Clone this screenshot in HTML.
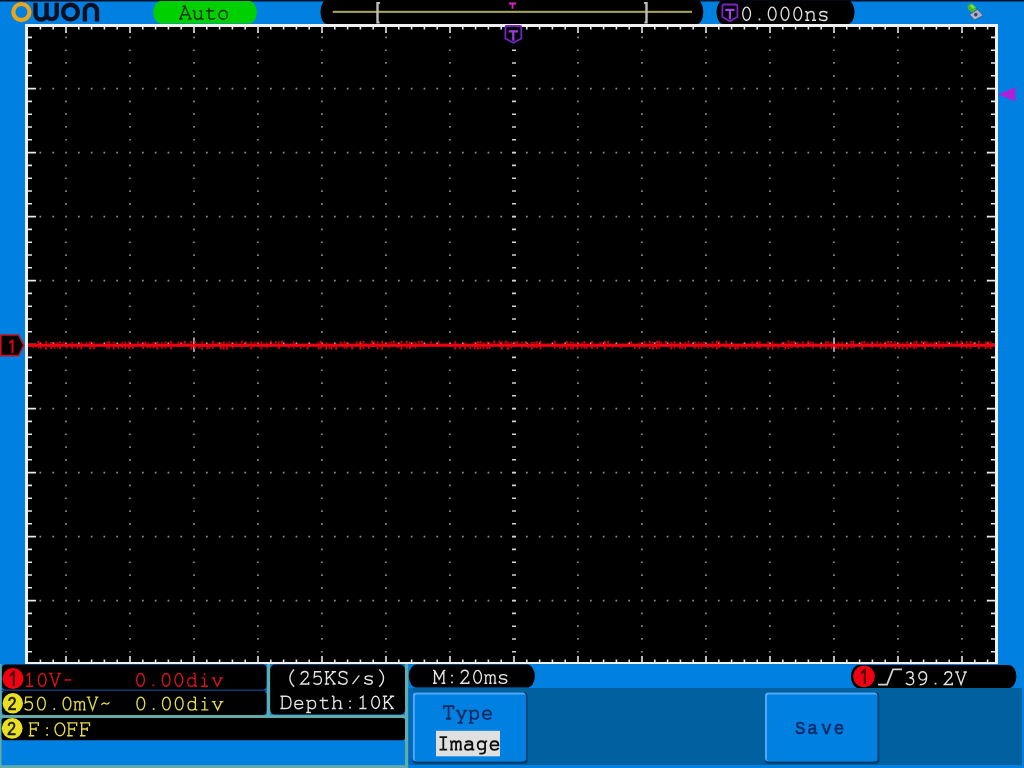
<!DOCTYPE html>
<html><head><meta charset="utf-8"><style>
html,body{margin:0;padding:0;width:1024px;height:768px;overflow:hidden;background:#0080e0;}
svg{display:block;position:absolute;left:0;top:0;filter:blur(0.4px);}
text{font-family:"Liberation Mono",monospace;}
</style></head><body>
<svg width="1024" height="768" viewBox="0 0 1024 768">
<rect x="0" y="0" width="1024" height="768" fill="#0080e0"/>
<rect x="0" y="0" width="1024" height="1.5" fill="#001028"/>
<rect x="25" y="24" width="973" height="640" fill="#f0f0f0"/>
<rect x="28" y="27" width="967" height="635" fill="#000"/>
<path d="M65.2 36.5h1.7v1.7h-1.7zM65.2 49.4h1.7v1.7h-1.7zM65.2 62.1h1.7v1.7h-1.7zM65.2 75.0h1.7v1.7h-1.7zM65.2 87.8h1.7v1.7h-1.7zM65.2 100.5h1.7v1.7h-1.7zM65.2 113.3h1.7v1.7h-1.7zM65.2 126.1h1.7v1.7h-1.7zM65.2 138.9h1.7v1.7h-1.7zM65.2 151.8h1.7v1.7h-1.7zM65.2 164.6h1.7v1.7h-1.7zM65.2 177.4h1.7v1.7h-1.7zM65.2 190.2h1.7v1.7h-1.7zM65.2 203.0h1.7v1.7h-1.7zM65.2 215.8h1.7v1.7h-1.7zM65.2 228.6h1.7v1.7h-1.7zM65.2 241.4h1.7v1.7h-1.7zM65.2 254.2h1.7v1.7h-1.7zM65.2 267.0h1.7v1.7h-1.7zM65.2 279.8h1.7v1.7h-1.7zM65.2 292.6h1.7v1.7h-1.7zM65.2 305.4h1.7v1.7h-1.7zM65.2 318.2h1.7v1.7h-1.7zM65.2 331.0h1.7v1.7h-1.7zM65.2 343.8h1.7v1.7h-1.7zM65.2 356.6h1.7v1.7h-1.7zM65.2 369.4h1.7v1.7h-1.7zM65.2 382.2h1.7v1.7h-1.7zM65.2 395.0h1.7v1.7h-1.7zM65.2 407.8h1.7v1.7h-1.7zM65.2 420.6h1.7v1.7h-1.7zM65.2 433.4h1.7v1.7h-1.7zM65.2 446.2h1.7v1.7h-1.7zM65.2 459.0h1.7v1.7h-1.7zM65.2 471.8h1.7v1.7h-1.7zM65.2 484.6h1.7v1.7h-1.7zM65.2 497.4h1.7v1.7h-1.7zM65.2 510.2h1.7v1.7h-1.7zM65.2 523.0h1.7v1.7h-1.7zM65.2 535.8h1.7v1.7h-1.7zM65.2 548.6h1.7v1.7h-1.7zM65.2 561.4h1.7v1.7h-1.7zM65.2 574.2h1.7v1.7h-1.7zM65.2 587.0h1.7v1.7h-1.7zM65.2 599.8h1.7v1.7h-1.7zM65.2 612.5h1.7v1.7h-1.7zM65.2 625.3h1.7v1.7h-1.7zM65.2 638.1h1.7v1.7h-1.7zM65.2 650.9h1.7v1.7h-1.7zM129.2 36.5h1.7v1.7h-1.7zM129.2 49.4h1.7v1.7h-1.7zM129.2 62.1h1.7v1.7h-1.7zM129.2 75.0h1.7v1.7h-1.7zM129.2 87.8h1.7v1.7h-1.7zM129.2 100.5h1.7v1.7h-1.7zM129.2 113.3h1.7v1.7h-1.7zM129.2 126.1h1.7v1.7h-1.7zM129.2 138.9h1.7v1.7h-1.7zM129.2 151.8h1.7v1.7h-1.7zM129.2 164.6h1.7v1.7h-1.7zM129.2 177.4h1.7v1.7h-1.7zM129.2 190.2h1.7v1.7h-1.7zM129.2 203.0h1.7v1.7h-1.7zM129.2 215.8h1.7v1.7h-1.7zM129.2 228.6h1.7v1.7h-1.7zM129.2 241.4h1.7v1.7h-1.7zM129.2 254.2h1.7v1.7h-1.7zM129.2 267.0h1.7v1.7h-1.7zM129.2 279.8h1.7v1.7h-1.7zM129.2 292.6h1.7v1.7h-1.7zM129.2 305.4h1.7v1.7h-1.7zM129.2 318.2h1.7v1.7h-1.7zM129.2 331.0h1.7v1.7h-1.7zM129.2 343.8h1.7v1.7h-1.7zM129.2 356.6h1.7v1.7h-1.7zM129.2 369.4h1.7v1.7h-1.7zM129.2 382.2h1.7v1.7h-1.7zM129.2 395.0h1.7v1.7h-1.7zM129.2 407.8h1.7v1.7h-1.7zM129.2 420.6h1.7v1.7h-1.7zM129.2 433.4h1.7v1.7h-1.7zM129.2 446.2h1.7v1.7h-1.7zM129.2 459.0h1.7v1.7h-1.7zM129.2 471.8h1.7v1.7h-1.7zM129.2 484.6h1.7v1.7h-1.7zM129.2 497.4h1.7v1.7h-1.7zM129.2 510.2h1.7v1.7h-1.7zM129.2 523.0h1.7v1.7h-1.7zM129.2 535.8h1.7v1.7h-1.7zM129.2 548.6h1.7v1.7h-1.7zM129.2 561.4h1.7v1.7h-1.7zM129.2 574.2h1.7v1.7h-1.7zM129.2 587.0h1.7v1.7h-1.7zM129.2 599.8h1.7v1.7h-1.7zM129.2 612.5h1.7v1.7h-1.7zM129.2 625.3h1.7v1.7h-1.7zM129.2 638.1h1.7v1.7h-1.7zM129.2 650.9h1.7v1.7h-1.7zM193.2 36.5h1.7v1.7h-1.7zM193.2 49.4h1.7v1.7h-1.7zM193.2 62.1h1.7v1.7h-1.7zM193.2 75.0h1.7v1.7h-1.7zM193.2 87.8h1.7v1.7h-1.7zM193.2 100.5h1.7v1.7h-1.7zM193.2 113.3h1.7v1.7h-1.7zM193.2 126.1h1.7v1.7h-1.7zM193.2 138.9h1.7v1.7h-1.7zM193.2 151.8h1.7v1.7h-1.7zM193.2 164.6h1.7v1.7h-1.7zM193.2 177.4h1.7v1.7h-1.7zM193.2 190.2h1.7v1.7h-1.7zM193.2 203.0h1.7v1.7h-1.7zM193.2 215.8h1.7v1.7h-1.7zM193.2 228.6h1.7v1.7h-1.7zM193.2 241.4h1.7v1.7h-1.7zM193.2 254.2h1.7v1.7h-1.7zM193.2 267.0h1.7v1.7h-1.7zM193.2 279.8h1.7v1.7h-1.7zM193.2 292.6h1.7v1.7h-1.7zM193.2 305.4h1.7v1.7h-1.7zM193.2 318.2h1.7v1.7h-1.7zM193.2 331.0h1.7v1.7h-1.7zM193.2 343.8h1.7v1.7h-1.7zM193.2 356.6h1.7v1.7h-1.7zM193.2 369.4h1.7v1.7h-1.7zM193.2 382.2h1.7v1.7h-1.7zM193.2 395.0h1.7v1.7h-1.7zM193.2 407.8h1.7v1.7h-1.7zM193.2 420.6h1.7v1.7h-1.7zM193.2 433.4h1.7v1.7h-1.7zM193.2 446.2h1.7v1.7h-1.7zM193.2 459.0h1.7v1.7h-1.7zM193.2 471.8h1.7v1.7h-1.7zM193.2 484.6h1.7v1.7h-1.7zM193.2 497.4h1.7v1.7h-1.7zM193.2 510.2h1.7v1.7h-1.7zM193.2 523.0h1.7v1.7h-1.7zM193.2 535.8h1.7v1.7h-1.7zM193.2 548.6h1.7v1.7h-1.7zM193.2 561.4h1.7v1.7h-1.7zM193.2 574.2h1.7v1.7h-1.7zM193.2 587.0h1.7v1.7h-1.7zM193.2 599.8h1.7v1.7h-1.7zM193.2 612.5h1.7v1.7h-1.7zM193.2 625.3h1.7v1.7h-1.7zM193.2 638.1h1.7v1.7h-1.7zM193.2 650.9h1.7v1.7h-1.7zM257.1 36.5h1.7v1.7h-1.7zM257.1 49.4h1.7v1.7h-1.7zM257.1 62.1h1.7v1.7h-1.7zM257.1 75.0h1.7v1.7h-1.7zM257.1 87.8h1.7v1.7h-1.7zM257.1 100.5h1.7v1.7h-1.7zM257.1 113.3h1.7v1.7h-1.7zM257.1 126.1h1.7v1.7h-1.7zM257.1 138.9h1.7v1.7h-1.7zM257.1 151.8h1.7v1.7h-1.7zM257.1 164.6h1.7v1.7h-1.7zM257.1 177.4h1.7v1.7h-1.7zM257.1 190.2h1.7v1.7h-1.7zM257.1 203.0h1.7v1.7h-1.7zM257.1 215.8h1.7v1.7h-1.7zM257.1 228.6h1.7v1.7h-1.7zM257.1 241.4h1.7v1.7h-1.7zM257.1 254.2h1.7v1.7h-1.7zM257.1 267.0h1.7v1.7h-1.7zM257.1 279.8h1.7v1.7h-1.7zM257.1 292.6h1.7v1.7h-1.7zM257.1 305.4h1.7v1.7h-1.7zM257.1 318.2h1.7v1.7h-1.7zM257.1 331.0h1.7v1.7h-1.7zM257.1 343.8h1.7v1.7h-1.7zM257.1 356.6h1.7v1.7h-1.7zM257.1 369.4h1.7v1.7h-1.7zM257.1 382.2h1.7v1.7h-1.7zM257.1 395.0h1.7v1.7h-1.7zM257.1 407.8h1.7v1.7h-1.7zM257.1 420.6h1.7v1.7h-1.7zM257.1 433.4h1.7v1.7h-1.7zM257.1 446.2h1.7v1.7h-1.7zM257.1 459.0h1.7v1.7h-1.7zM257.1 471.8h1.7v1.7h-1.7zM257.1 484.6h1.7v1.7h-1.7zM257.1 497.4h1.7v1.7h-1.7zM257.1 510.2h1.7v1.7h-1.7zM257.1 523.0h1.7v1.7h-1.7zM257.1 535.8h1.7v1.7h-1.7zM257.1 548.6h1.7v1.7h-1.7zM257.1 561.4h1.7v1.7h-1.7zM257.1 574.2h1.7v1.7h-1.7zM257.1 587.0h1.7v1.7h-1.7zM257.1 599.8h1.7v1.7h-1.7zM257.1 612.5h1.7v1.7h-1.7zM257.1 625.3h1.7v1.7h-1.7zM257.1 638.1h1.7v1.7h-1.7zM257.1 650.9h1.7v1.7h-1.7zM321.1 36.5h1.7v1.7h-1.7zM321.1 49.4h1.7v1.7h-1.7zM321.1 62.1h1.7v1.7h-1.7zM321.1 75.0h1.7v1.7h-1.7zM321.1 87.8h1.7v1.7h-1.7zM321.1 100.5h1.7v1.7h-1.7zM321.1 113.3h1.7v1.7h-1.7zM321.1 126.1h1.7v1.7h-1.7zM321.1 138.9h1.7v1.7h-1.7zM321.1 151.8h1.7v1.7h-1.7zM321.1 164.6h1.7v1.7h-1.7zM321.1 177.4h1.7v1.7h-1.7zM321.1 190.2h1.7v1.7h-1.7zM321.1 203.0h1.7v1.7h-1.7zM321.1 215.8h1.7v1.7h-1.7zM321.1 228.6h1.7v1.7h-1.7zM321.1 241.4h1.7v1.7h-1.7zM321.1 254.2h1.7v1.7h-1.7zM321.1 267.0h1.7v1.7h-1.7zM321.1 279.8h1.7v1.7h-1.7zM321.1 292.6h1.7v1.7h-1.7zM321.1 305.4h1.7v1.7h-1.7zM321.1 318.2h1.7v1.7h-1.7zM321.1 331.0h1.7v1.7h-1.7zM321.1 343.8h1.7v1.7h-1.7zM321.1 356.6h1.7v1.7h-1.7zM321.1 369.4h1.7v1.7h-1.7zM321.1 382.2h1.7v1.7h-1.7zM321.1 395.0h1.7v1.7h-1.7zM321.1 407.8h1.7v1.7h-1.7zM321.1 420.6h1.7v1.7h-1.7zM321.1 433.4h1.7v1.7h-1.7zM321.1 446.2h1.7v1.7h-1.7zM321.1 459.0h1.7v1.7h-1.7zM321.1 471.8h1.7v1.7h-1.7zM321.1 484.6h1.7v1.7h-1.7zM321.1 497.4h1.7v1.7h-1.7zM321.1 510.2h1.7v1.7h-1.7zM321.1 523.0h1.7v1.7h-1.7zM321.1 535.8h1.7v1.7h-1.7zM321.1 548.6h1.7v1.7h-1.7zM321.1 561.4h1.7v1.7h-1.7zM321.1 574.2h1.7v1.7h-1.7zM321.1 587.0h1.7v1.7h-1.7zM321.1 599.8h1.7v1.7h-1.7zM321.1 612.5h1.7v1.7h-1.7zM321.1 625.3h1.7v1.7h-1.7zM321.1 638.1h1.7v1.7h-1.7zM321.1 650.9h1.7v1.7h-1.7zM385.1 36.5h1.7v1.7h-1.7zM385.1 49.4h1.7v1.7h-1.7zM385.1 62.1h1.7v1.7h-1.7zM385.1 75.0h1.7v1.7h-1.7zM385.1 87.8h1.7v1.7h-1.7zM385.1 100.5h1.7v1.7h-1.7zM385.1 113.3h1.7v1.7h-1.7zM385.1 126.1h1.7v1.7h-1.7zM385.1 138.9h1.7v1.7h-1.7zM385.1 151.8h1.7v1.7h-1.7zM385.1 164.6h1.7v1.7h-1.7zM385.1 177.4h1.7v1.7h-1.7zM385.1 190.2h1.7v1.7h-1.7zM385.1 203.0h1.7v1.7h-1.7zM385.1 215.8h1.7v1.7h-1.7zM385.1 228.6h1.7v1.7h-1.7zM385.1 241.4h1.7v1.7h-1.7zM385.1 254.2h1.7v1.7h-1.7zM385.1 267.0h1.7v1.7h-1.7zM385.1 279.8h1.7v1.7h-1.7zM385.1 292.6h1.7v1.7h-1.7zM385.1 305.4h1.7v1.7h-1.7zM385.1 318.2h1.7v1.7h-1.7zM385.1 331.0h1.7v1.7h-1.7zM385.1 343.8h1.7v1.7h-1.7zM385.1 356.6h1.7v1.7h-1.7zM385.1 369.4h1.7v1.7h-1.7zM385.1 382.2h1.7v1.7h-1.7zM385.1 395.0h1.7v1.7h-1.7zM385.1 407.8h1.7v1.7h-1.7zM385.1 420.6h1.7v1.7h-1.7zM385.1 433.4h1.7v1.7h-1.7zM385.1 446.2h1.7v1.7h-1.7zM385.1 459.0h1.7v1.7h-1.7zM385.1 471.8h1.7v1.7h-1.7zM385.1 484.6h1.7v1.7h-1.7zM385.1 497.4h1.7v1.7h-1.7zM385.1 510.2h1.7v1.7h-1.7zM385.1 523.0h1.7v1.7h-1.7zM385.1 535.8h1.7v1.7h-1.7zM385.1 548.6h1.7v1.7h-1.7zM385.1 561.4h1.7v1.7h-1.7zM385.1 574.2h1.7v1.7h-1.7zM385.1 587.0h1.7v1.7h-1.7zM385.1 599.8h1.7v1.7h-1.7zM385.1 612.5h1.7v1.7h-1.7zM385.1 625.3h1.7v1.7h-1.7zM385.1 638.1h1.7v1.7h-1.7zM385.1 650.9h1.7v1.7h-1.7zM449.1 36.5h1.7v1.7h-1.7zM449.1 49.4h1.7v1.7h-1.7zM449.1 62.1h1.7v1.7h-1.7zM449.1 75.0h1.7v1.7h-1.7zM449.1 87.8h1.7v1.7h-1.7zM449.1 100.5h1.7v1.7h-1.7zM449.1 113.3h1.7v1.7h-1.7zM449.1 126.1h1.7v1.7h-1.7zM449.1 138.9h1.7v1.7h-1.7zM449.1 151.8h1.7v1.7h-1.7zM449.1 164.6h1.7v1.7h-1.7zM449.1 177.4h1.7v1.7h-1.7zM449.1 190.2h1.7v1.7h-1.7zM449.1 203.0h1.7v1.7h-1.7zM449.1 215.8h1.7v1.7h-1.7zM449.1 228.6h1.7v1.7h-1.7zM449.1 241.4h1.7v1.7h-1.7zM449.1 254.2h1.7v1.7h-1.7zM449.1 267.0h1.7v1.7h-1.7zM449.1 279.8h1.7v1.7h-1.7zM449.1 292.6h1.7v1.7h-1.7zM449.1 305.4h1.7v1.7h-1.7zM449.1 318.2h1.7v1.7h-1.7zM449.1 331.0h1.7v1.7h-1.7zM449.1 343.8h1.7v1.7h-1.7zM449.1 356.6h1.7v1.7h-1.7zM449.1 369.4h1.7v1.7h-1.7zM449.1 382.2h1.7v1.7h-1.7zM449.1 395.0h1.7v1.7h-1.7zM449.1 407.8h1.7v1.7h-1.7zM449.1 420.6h1.7v1.7h-1.7zM449.1 433.4h1.7v1.7h-1.7zM449.1 446.2h1.7v1.7h-1.7zM449.1 459.0h1.7v1.7h-1.7zM449.1 471.8h1.7v1.7h-1.7zM449.1 484.6h1.7v1.7h-1.7zM449.1 497.4h1.7v1.7h-1.7zM449.1 510.2h1.7v1.7h-1.7zM449.1 523.0h1.7v1.7h-1.7zM449.1 535.8h1.7v1.7h-1.7zM449.1 548.6h1.7v1.7h-1.7zM449.1 561.4h1.7v1.7h-1.7zM449.1 574.2h1.7v1.7h-1.7zM449.1 587.0h1.7v1.7h-1.7zM449.1 599.8h1.7v1.7h-1.7zM449.1 612.5h1.7v1.7h-1.7zM449.1 625.3h1.7v1.7h-1.7zM449.1 638.1h1.7v1.7h-1.7zM449.1 650.9h1.7v1.7h-1.7zM577.1 36.5h1.7v1.7h-1.7zM577.1 49.4h1.7v1.7h-1.7zM577.1 62.1h1.7v1.7h-1.7zM577.1 75.0h1.7v1.7h-1.7zM577.1 87.8h1.7v1.7h-1.7zM577.1 100.5h1.7v1.7h-1.7zM577.1 113.3h1.7v1.7h-1.7zM577.1 126.1h1.7v1.7h-1.7zM577.1 138.9h1.7v1.7h-1.7zM577.1 151.8h1.7v1.7h-1.7zM577.1 164.6h1.7v1.7h-1.7zM577.1 177.4h1.7v1.7h-1.7zM577.1 190.2h1.7v1.7h-1.7zM577.1 203.0h1.7v1.7h-1.7zM577.1 215.8h1.7v1.7h-1.7zM577.1 228.6h1.7v1.7h-1.7zM577.1 241.4h1.7v1.7h-1.7zM577.1 254.2h1.7v1.7h-1.7zM577.1 267.0h1.7v1.7h-1.7zM577.1 279.8h1.7v1.7h-1.7zM577.1 292.6h1.7v1.7h-1.7zM577.1 305.4h1.7v1.7h-1.7zM577.1 318.2h1.7v1.7h-1.7zM577.1 331.0h1.7v1.7h-1.7zM577.1 343.8h1.7v1.7h-1.7zM577.1 356.6h1.7v1.7h-1.7zM577.1 369.4h1.7v1.7h-1.7zM577.1 382.2h1.7v1.7h-1.7zM577.1 395.0h1.7v1.7h-1.7zM577.1 407.8h1.7v1.7h-1.7zM577.1 420.6h1.7v1.7h-1.7zM577.1 433.4h1.7v1.7h-1.7zM577.1 446.2h1.7v1.7h-1.7zM577.1 459.0h1.7v1.7h-1.7zM577.1 471.8h1.7v1.7h-1.7zM577.1 484.6h1.7v1.7h-1.7zM577.1 497.4h1.7v1.7h-1.7zM577.1 510.2h1.7v1.7h-1.7zM577.1 523.0h1.7v1.7h-1.7zM577.1 535.8h1.7v1.7h-1.7zM577.1 548.6h1.7v1.7h-1.7zM577.1 561.4h1.7v1.7h-1.7zM577.1 574.2h1.7v1.7h-1.7zM577.1 587.0h1.7v1.7h-1.7zM577.1 599.8h1.7v1.7h-1.7zM577.1 612.5h1.7v1.7h-1.7zM577.1 625.3h1.7v1.7h-1.7zM577.1 638.1h1.7v1.7h-1.7zM577.1 650.9h1.7v1.7h-1.7zM641.1 36.5h1.7v1.7h-1.7zM641.1 49.4h1.7v1.7h-1.7zM641.1 62.1h1.7v1.7h-1.7zM641.1 75.0h1.7v1.7h-1.7zM641.1 87.8h1.7v1.7h-1.7zM641.1 100.5h1.7v1.7h-1.7zM641.1 113.3h1.7v1.7h-1.7zM641.1 126.1h1.7v1.7h-1.7zM641.1 138.9h1.7v1.7h-1.7zM641.1 151.8h1.7v1.7h-1.7zM641.1 164.6h1.7v1.7h-1.7zM641.1 177.4h1.7v1.7h-1.7zM641.1 190.2h1.7v1.7h-1.7zM641.1 203.0h1.7v1.7h-1.7zM641.1 215.8h1.7v1.7h-1.7zM641.1 228.6h1.7v1.7h-1.7zM641.1 241.4h1.7v1.7h-1.7zM641.1 254.2h1.7v1.7h-1.7zM641.1 267.0h1.7v1.7h-1.7zM641.1 279.8h1.7v1.7h-1.7zM641.1 292.6h1.7v1.7h-1.7zM641.1 305.4h1.7v1.7h-1.7zM641.1 318.2h1.7v1.7h-1.7zM641.1 331.0h1.7v1.7h-1.7zM641.1 343.8h1.7v1.7h-1.7zM641.1 356.6h1.7v1.7h-1.7zM641.1 369.4h1.7v1.7h-1.7zM641.1 382.2h1.7v1.7h-1.7zM641.1 395.0h1.7v1.7h-1.7zM641.1 407.8h1.7v1.7h-1.7zM641.1 420.6h1.7v1.7h-1.7zM641.1 433.4h1.7v1.7h-1.7zM641.1 446.2h1.7v1.7h-1.7zM641.1 459.0h1.7v1.7h-1.7zM641.1 471.8h1.7v1.7h-1.7zM641.1 484.6h1.7v1.7h-1.7zM641.1 497.4h1.7v1.7h-1.7zM641.1 510.2h1.7v1.7h-1.7zM641.1 523.0h1.7v1.7h-1.7zM641.1 535.8h1.7v1.7h-1.7zM641.1 548.6h1.7v1.7h-1.7zM641.1 561.4h1.7v1.7h-1.7zM641.1 574.2h1.7v1.7h-1.7zM641.1 587.0h1.7v1.7h-1.7zM641.1 599.8h1.7v1.7h-1.7zM641.1 612.5h1.7v1.7h-1.7zM641.1 625.3h1.7v1.7h-1.7zM641.1 638.1h1.7v1.7h-1.7zM641.1 650.9h1.7v1.7h-1.7zM705.1 36.5h1.7v1.7h-1.7zM705.1 49.4h1.7v1.7h-1.7zM705.1 62.1h1.7v1.7h-1.7zM705.1 75.0h1.7v1.7h-1.7zM705.1 87.8h1.7v1.7h-1.7zM705.1 100.5h1.7v1.7h-1.7zM705.1 113.3h1.7v1.7h-1.7zM705.1 126.1h1.7v1.7h-1.7zM705.1 138.9h1.7v1.7h-1.7zM705.1 151.8h1.7v1.7h-1.7zM705.1 164.6h1.7v1.7h-1.7zM705.1 177.4h1.7v1.7h-1.7zM705.1 190.2h1.7v1.7h-1.7zM705.1 203.0h1.7v1.7h-1.7zM705.1 215.8h1.7v1.7h-1.7zM705.1 228.6h1.7v1.7h-1.7zM705.1 241.4h1.7v1.7h-1.7zM705.1 254.2h1.7v1.7h-1.7zM705.1 267.0h1.7v1.7h-1.7zM705.1 279.8h1.7v1.7h-1.7zM705.1 292.6h1.7v1.7h-1.7zM705.1 305.4h1.7v1.7h-1.7zM705.1 318.2h1.7v1.7h-1.7zM705.1 331.0h1.7v1.7h-1.7zM705.1 343.8h1.7v1.7h-1.7zM705.1 356.6h1.7v1.7h-1.7zM705.1 369.4h1.7v1.7h-1.7zM705.1 382.2h1.7v1.7h-1.7zM705.1 395.0h1.7v1.7h-1.7zM705.1 407.8h1.7v1.7h-1.7zM705.1 420.6h1.7v1.7h-1.7zM705.1 433.4h1.7v1.7h-1.7zM705.1 446.2h1.7v1.7h-1.7zM705.1 459.0h1.7v1.7h-1.7zM705.1 471.8h1.7v1.7h-1.7zM705.1 484.6h1.7v1.7h-1.7zM705.1 497.4h1.7v1.7h-1.7zM705.1 510.2h1.7v1.7h-1.7zM705.1 523.0h1.7v1.7h-1.7zM705.1 535.8h1.7v1.7h-1.7zM705.1 548.6h1.7v1.7h-1.7zM705.1 561.4h1.7v1.7h-1.7zM705.1 574.2h1.7v1.7h-1.7zM705.1 587.0h1.7v1.7h-1.7zM705.1 599.8h1.7v1.7h-1.7zM705.1 612.5h1.7v1.7h-1.7zM705.1 625.3h1.7v1.7h-1.7zM705.1 638.1h1.7v1.7h-1.7zM705.1 650.9h1.7v1.7h-1.7zM769.1 36.5h1.7v1.7h-1.7zM769.1 49.4h1.7v1.7h-1.7zM769.1 62.1h1.7v1.7h-1.7zM769.1 75.0h1.7v1.7h-1.7zM769.1 87.8h1.7v1.7h-1.7zM769.1 100.5h1.7v1.7h-1.7zM769.1 113.3h1.7v1.7h-1.7zM769.1 126.1h1.7v1.7h-1.7zM769.1 138.9h1.7v1.7h-1.7zM769.1 151.8h1.7v1.7h-1.7zM769.1 164.6h1.7v1.7h-1.7zM769.1 177.4h1.7v1.7h-1.7zM769.1 190.2h1.7v1.7h-1.7zM769.1 203.0h1.7v1.7h-1.7zM769.1 215.8h1.7v1.7h-1.7zM769.1 228.6h1.7v1.7h-1.7zM769.1 241.4h1.7v1.7h-1.7zM769.1 254.2h1.7v1.7h-1.7zM769.1 267.0h1.7v1.7h-1.7zM769.1 279.8h1.7v1.7h-1.7zM769.1 292.6h1.7v1.7h-1.7zM769.1 305.4h1.7v1.7h-1.7zM769.1 318.2h1.7v1.7h-1.7zM769.1 331.0h1.7v1.7h-1.7zM769.1 343.8h1.7v1.7h-1.7zM769.1 356.6h1.7v1.7h-1.7zM769.1 369.4h1.7v1.7h-1.7zM769.1 382.2h1.7v1.7h-1.7zM769.1 395.0h1.7v1.7h-1.7zM769.1 407.8h1.7v1.7h-1.7zM769.1 420.6h1.7v1.7h-1.7zM769.1 433.4h1.7v1.7h-1.7zM769.1 446.2h1.7v1.7h-1.7zM769.1 459.0h1.7v1.7h-1.7zM769.1 471.8h1.7v1.7h-1.7zM769.1 484.6h1.7v1.7h-1.7zM769.1 497.4h1.7v1.7h-1.7zM769.1 510.2h1.7v1.7h-1.7zM769.1 523.0h1.7v1.7h-1.7zM769.1 535.8h1.7v1.7h-1.7zM769.1 548.6h1.7v1.7h-1.7zM769.1 561.4h1.7v1.7h-1.7zM769.1 574.2h1.7v1.7h-1.7zM769.1 587.0h1.7v1.7h-1.7zM769.1 599.8h1.7v1.7h-1.7zM769.1 612.5h1.7v1.7h-1.7zM769.1 625.3h1.7v1.7h-1.7zM769.1 638.1h1.7v1.7h-1.7zM769.1 650.9h1.7v1.7h-1.7zM833.1 36.5h1.7v1.7h-1.7zM833.1 49.4h1.7v1.7h-1.7zM833.1 62.1h1.7v1.7h-1.7zM833.1 75.0h1.7v1.7h-1.7zM833.1 87.8h1.7v1.7h-1.7zM833.1 100.5h1.7v1.7h-1.7zM833.1 113.3h1.7v1.7h-1.7zM833.1 126.1h1.7v1.7h-1.7zM833.1 138.9h1.7v1.7h-1.7zM833.1 151.8h1.7v1.7h-1.7zM833.1 164.6h1.7v1.7h-1.7zM833.1 177.4h1.7v1.7h-1.7zM833.1 190.2h1.7v1.7h-1.7zM833.1 203.0h1.7v1.7h-1.7zM833.1 215.8h1.7v1.7h-1.7zM833.1 228.6h1.7v1.7h-1.7zM833.1 241.4h1.7v1.7h-1.7zM833.1 254.2h1.7v1.7h-1.7zM833.1 267.0h1.7v1.7h-1.7zM833.1 279.8h1.7v1.7h-1.7zM833.1 292.6h1.7v1.7h-1.7zM833.1 305.4h1.7v1.7h-1.7zM833.1 318.2h1.7v1.7h-1.7zM833.1 331.0h1.7v1.7h-1.7zM833.1 343.8h1.7v1.7h-1.7zM833.1 356.6h1.7v1.7h-1.7zM833.1 369.4h1.7v1.7h-1.7zM833.1 382.2h1.7v1.7h-1.7zM833.1 395.0h1.7v1.7h-1.7zM833.1 407.8h1.7v1.7h-1.7zM833.1 420.6h1.7v1.7h-1.7zM833.1 433.4h1.7v1.7h-1.7zM833.1 446.2h1.7v1.7h-1.7zM833.1 459.0h1.7v1.7h-1.7zM833.1 471.8h1.7v1.7h-1.7zM833.1 484.6h1.7v1.7h-1.7zM833.1 497.4h1.7v1.7h-1.7zM833.1 510.2h1.7v1.7h-1.7zM833.1 523.0h1.7v1.7h-1.7zM833.1 535.8h1.7v1.7h-1.7zM833.1 548.6h1.7v1.7h-1.7zM833.1 561.4h1.7v1.7h-1.7zM833.1 574.2h1.7v1.7h-1.7zM833.1 587.0h1.7v1.7h-1.7zM833.1 599.8h1.7v1.7h-1.7zM833.1 612.5h1.7v1.7h-1.7zM833.1 625.3h1.7v1.7h-1.7zM833.1 638.1h1.7v1.7h-1.7zM833.1 650.9h1.7v1.7h-1.7zM897.1 36.5h1.7v1.7h-1.7zM897.1 49.4h1.7v1.7h-1.7zM897.1 62.1h1.7v1.7h-1.7zM897.1 75.0h1.7v1.7h-1.7zM897.1 87.8h1.7v1.7h-1.7zM897.1 100.5h1.7v1.7h-1.7zM897.1 113.3h1.7v1.7h-1.7zM897.1 126.1h1.7v1.7h-1.7zM897.1 138.9h1.7v1.7h-1.7zM897.1 151.8h1.7v1.7h-1.7zM897.1 164.6h1.7v1.7h-1.7zM897.1 177.4h1.7v1.7h-1.7zM897.1 190.2h1.7v1.7h-1.7zM897.1 203.0h1.7v1.7h-1.7zM897.1 215.8h1.7v1.7h-1.7zM897.1 228.6h1.7v1.7h-1.7zM897.1 241.4h1.7v1.7h-1.7zM897.1 254.2h1.7v1.7h-1.7zM897.1 267.0h1.7v1.7h-1.7zM897.1 279.8h1.7v1.7h-1.7zM897.1 292.6h1.7v1.7h-1.7zM897.1 305.4h1.7v1.7h-1.7zM897.1 318.2h1.7v1.7h-1.7zM897.1 331.0h1.7v1.7h-1.7zM897.1 343.8h1.7v1.7h-1.7zM897.1 356.6h1.7v1.7h-1.7zM897.1 369.4h1.7v1.7h-1.7zM897.1 382.2h1.7v1.7h-1.7zM897.1 395.0h1.7v1.7h-1.7zM897.1 407.8h1.7v1.7h-1.7zM897.1 420.6h1.7v1.7h-1.7zM897.1 433.4h1.7v1.7h-1.7zM897.1 446.2h1.7v1.7h-1.7zM897.1 459.0h1.7v1.7h-1.7zM897.1 471.8h1.7v1.7h-1.7zM897.1 484.6h1.7v1.7h-1.7zM897.1 497.4h1.7v1.7h-1.7zM897.1 510.2h1.7v1.7h-1.7zM897.1 523.0h1.7v1.7h-1.7zM897.1 535.8h1.7v1.7h-1.7zM897.1 548.6h1.7v1.7h-1.7zM897.1 561.4h1.7v1.7h-1.7zM897.1 574.2h1.7v1.7h-1.7zM897.1 587.0h1.7v1.7h-1.7zM897.1 599.8h1.7v1.7h-1.7zM897.1 612.5h1.7v1.7h-1.7zM897.1 625.3h1.7v1.7h-1.7zM897.1 638.1h1.7v1.7h-1.7zM897.1 650.9h1.7v1.7h-1.7zM961.1 36.5h1.7v1.7h-1.7zM961.1 49.4h1.7v1.7h-1.7zM961.1 62.1h1.7v1.7h-1.7zM961.1 75.0h1.7v1.7h-1.7zM961.1 87.8h1.7v1.7h-1.7zM961.1 100.5h1.7v1.7h-1.7zM961.1 113.3h1.7v1.7h-1.7zM961.1 126.1h1.7v1.7h-1.7zM961.1 138.9h1.7v1.7h-1.7zM961.1 151.8h1.7v1.7h-1.7zM961.1 164.6h1.7v1.7h-1.7zM961.1 177.4h1.7v1.7h-1.7zM961.1 190.2h1.7v1.7h-1.7zM961.1 203.0h1.7v1.7h-1.7zM961.1 215.8h1.7v1.7h-1.7zM961.1 228.6h1.7v1.7h-1.7zM961.1 241.4h1.7v1.7h-1.7zM961.1 254.2h1.7v1.7h-1.7zM961.1 267.0h1.7v1.7h-1.7zM961.1 279.8h1.7v1.7h-1.7zM961.1 292.6h1.7v1.7h-1.7zM961.1 305.4h1.7v1.7h-1.7zM961.1 318.2h1.7v1.7h-1.7zM961.1 331.0h1.7v1.7h-1.7zM961.1 343.8h1.7v1.7h-1.7zM961.1 356.6h1.7v1.7h-1.7zM961.1 369.4h1.7v1.7h-1.7zM961.1 382.2h1.7v1.7h-1.7zM961.1 395.0h1.7v1.7h-1.7zM961.1 407.8h1.7v1.7h-1.7zM961.1 420.6h1.7v1.7h-1.7zM961.1 433.4h1.7v1.7h-1.7zM961.1 446.2h1.7v1.7h-1.7zM961.1 459.0h1.7v1.7h-1.7zM961.1 471.8h1.7v1.7h-1.7zM961.1 484.6h1.7v1.7h-1.7zM961.1 497.4h1.7v1.7h-1.7zM961.1 510.2h1.7v1.7h-1.7zM961.1 523.0h1.7v1.7h-1.7zM961.1 535.8h1.7v1.7h-1.7zM961.1 548.6h1.7v1.7h-1.7zM961.1 561.4h1.7v1.7h-1.7zM961.1 574.2h1.7v1.7h-1.7zM961.1 587.0h1.7v1.7h-1.7zM961.1 599.8h1.7v1.7h-1.7zM961.1 612.5h1.7v1.7h-1.7zM961.1 625.3h1.7v1.7h-1.7zM961.1 638.1h1.7v1.7h-1.7zM961.1 650.9h1.7v1.7h-1.7zM39.5 87.8h1.7v1.7h-1.7zM52.4 87.8h1.7v1.7h-1.7zM65.2 87.8h1.7v1.7h-1.7zM78.0 87.8h1.7v1.7h-1.7zM90.8 87.8h1.7v1.7h-1.7zM103.5 87.8h1.7v1.7h-1.7zM116.3 87.8h1.7v1.7h-1.7zM129.2 87.8h1.7v1.7h-1.7zM142.0 87.8h1.7v1.7h-1.7zM154.8 87.8h1.7v1.7h-1.7zM167.6 87.8h1.7v1.7h-1.7zM180.4 87.8h1.7v1.7h-1.7zM193.2 87.8h1.7v1.7h-1.7zM206.0 87.8h1.7v1.7h-1.7zM218.8 87.8h1.7v1.7h-1.7zM231.6 87.8h1.7v1.7h-1.7zM244.4 87.8h1.7v1.7h-1.7zM257.2 87.8h1.7v1.7h-1.7zM270.0 87.8h1.7v1.7h-1.7zM282.8 87.8h1.7v1.7h-1.7zM295.6 87.8h1.7v1.7h-1.7zM308.4 87.8h1.7v1.7h-1.7zM321.2 87.8h1.7v1.7h-1.7zM334.0 87.8h1.7v1.7h-1.7zM346.8 87.8h1.7v1.7h-1.7zM359.6 87.8h1.7v1.7h-1.7zM372.4 87.8h1.7v1.7h-1.7zM385.2 87.8h1.7v1.7h-1.7zM398.0 87.8h1.7v1.7h-1.7zM410.8 87.8h1.7v1.7h-1.7zM423.6 87.8h1.7v1.7h-1.7zM436.4 87.8h1.7v1.7h-1.7zM449.2 87.8h1.7v1.7h-1.7zM462.0 87.8h1.7v1.7h-1.7zM474.8 87.8h1.7v1.7h-1.7zM487.6 87.8h1.7v1.7h-1.7zM500.4 87.8h1.7v1.7h-1.7zM513.2 87.8h1.7v1.7h-1.7zM526.0 87.8h1.7v1.7h-1.7zM538.8 87.8h1.7v1.7h-1.7zM551.6 87.8h1.7v1.7h-1.7zM564.4 87.8h1.7v1.7h-1.7zM577.2 87.8h1.7v1.7h-1.7zM590.0 87.8h1.7v1.7h-1.7zM602.8 87.8h1.7v1.7h-1.7zM615.5 87.8h1.7v1.7h-1.7zM628.3 87.8h1.7v1.7h-1.7zM641.1 87.8h1.7v1.7h-1.7zM653.9 87.8h1.7v1.7h-1.7zM666.7 87.8h1.7v1.7h-1.7zM679.5 87.8h1.7v1.7h-1.7zM692.3 87.8h1.7v1.7h-1.7zM705.1 87.8h1.7v1.7h-1.7zM717.9 87.8h1.7v1.7h-1.7zM730.7 87.8h1.7v1.7h-1.7zM743.5 87.8h1.7v1.7h-1.7zM756.3 87.8h1.7v1.7h-1.7zM769.1 87.8h1.7v1.7h-1.7zM781.9 87.8h1.7v1.7h-1.7zM794.7 87.8h1.7v1.7h-1.7zM807.5 87.8h1.7v1.7h-1.7zM820.3 87.8h1.7v1.7h-1.7zM833.1 87.8h1.7v1.7h-1.7zM845.9 87.8h1.7v1.7h-1.7zM858.7 87.8h1.7v1.7h-1.7zM871.5 87.8h1.7v1.7h-1.7zM884.3 87.8h1.7v1.7h-1.7zM897.1 87.8h1.7v1.7h-1.7zM909.9 87.8h1.7v1.7h-1.7zM922.7 87.8h1.7v1.7h-1.7zM935.5 87.8h1.7v1.7h-1.7zM948.3 87.8h1.7v1.7h-1.7zM961.1 87.8h1.7v1.7h-1.7zM973.9 87.8h1.7v1.7h-1.7zM986.7 87.8h1.7v1.7h-1.7zM39.5 151.8h1.7v1.7h-1.7zM52.4 151.8h1.7v1.7h-1.7zM65.2 151.8h1.7v1.7h-1.7zM78.0 151.8h1.7v1.7h-1.7zM90.8 151.8h1.7v1.7h-1.7zM103.5 151.8h1.7v1.7h-1.7zM116.3 151.8h1.7v1.7h-1.7zM129.2 151.8h1.7v1.7h-1.7zM142.0 151.8h1.7v1.7h-1.7zM154.8 151.8h1.7v1.7h-1.7zM167.6 151.8h1.7v1.7h-1.7zM180.4 151.8h1.7v1.7h-1.7zM193.2 151.8h1.7v1.7h-1.7zM206.0 151.8h1.7v1.7h-1.7zM218.8 151.8h1.7v1.7h-1.7zM231.6 151.8h1.7v1.7h-1.7zM244.4 151.8h1.7v1.7h-1.7zM257.2 151.8h1.7v1.7h-1.7zM270.0 151.8h1.7v1.7h-1.7zM282.8 151.8h1.7v1.7h-1.7zM295.6 151.8h1.7v1.7h-1.7zM308.4 151.8h1.7v1.7h-1.7zM321.2 151.8h1.7v1.7h-1.7zM334.0 151.8h1.7v1.7h-1.7zM346.8 151.8h1.7v1.7h-1.7zM359.6 151.8h1.7v1.7h-1.7zM372.4 151.8h1.7v1.7h-1.7zM385.2 151.8h1.7v1.7h-1.7zM398.0 151.8h1.7v1.7h-1.7zM410.8 151.8h1.7v1.7h-1.7zM423.6 151.8h1.7v1.7h-1.7zM436.4 151.8h1.7v1.7h-1.7zM449.2 151.8h1.7v1.7h-1.7zM462.0 151.8h1.7v1.7h-1.7zM474.8 151.8h1.7v1.7h-1.7zM487.6 151.8h1.7v1.7h-1.7zM500.4 151.8h1.7v1.7h-1.7zM513.2 151.8h1.7v1.7h-1.7zM526.0 151.8h1.7v1.7h-1.7zM538.8 151.8h1.7v1.7h-1.7zM551.6 151.8h1.7v1.7h-1.7zM564.4 151.8h1.7v1.7h-1.7zM577.2 151.8h1.7v1.7h-1.7zM590.0 151.8h1.7v1.7h-1.7zM602.8 151.8h1.7v1.7h-1.7zM615.5 151.8h1.7v1.7h-1.7zM628.3 151.8h1.7v1.7h-1.7zM641.1 151.8h1.7v1.7h-1.7zM653.9 151.8h1.7v1.7h-1.7zM666.7 151.8h1.7v1.7h-1.7zM679.5 151.8h1.7v1.7h-1.7zM692.3 151.8h1.7v1.7h-1.7zM705.1 151.8h1.7v1.7h-1.7zM717.9 151.8h1.7v1.7h-1.7zM730.7 151.8h1.7v1.7h-1.7zM743.5 151.8h1.7v1.7h-1.7zM756.3 151.8h1.7v1.7h-1.7zM769.1 151.8h1.7v1.7h-1.7zM781.9 151.8h1.7v1.7h-1.7zM794.7 151.8h1.7v1.7h-1.7zM807.5 151.8h1.7v1.7h-1.7zM820.3 151.8h1.7v1.7h-1.7zM833.1 151.8h1.7v1.7h-1.7zM845.9 151.8h1.7v1.7h-1.7zM858.7 151.8h1.7v1.7h-1.7zM871.5 151.8h1.7v1.7h-1.7zM884.3 151.8h1.7v1.7h-1.7zM897.1 151.8h1.7v1.7h-1.7zM909.9 151.8h1.7v1.7h-1.7zM922.7 151.8h1.7v1.7h-1.7zM935.5 151.8h1.7v1.7h-1.7zM948.3 151.8h1.7v1.7h-1.7zM961.1 151.8h1.7v1.7h-1.7zM973.9 151.8h1.7v1.7h-1.7zM986.7 151.8h1.7v1.7h-1.7zM39.5 215.8h1.7v1.7h-1.7zM52.4 215.8h1.7v1.7h-1.7zM65.2 215.8h1.7v1.7h-1.7zM78.0 215.8h1.7v1.7h-1.7zM90.8 215.8h1.7v1.7h-1.7zM103.5 215.8h1.7v1.7h-1.7zM116.3 215.8h1.7v1.7h-1.7zM129.2 215.8h1.7v1.7h-1.7zM142.0 215.8h1.7v1.7h-1.7zM154.8 215.8h1.7v1.7h-1.7zM167.6 215.8h1.7v1.7h-1.7zM180.4 215.8h1.7v1.7h-1.7zM193.2 215.8h1.7v1.7h-1.7zM206.0 215.8h1.7v1.7h-1.7zM218.8 215.8h1.7v1.7h-1.7zM231.6 215.8h1.7v1.7h-1.7zM244.4 215.8h1.7v1.7h-1.7zM257.2 215.8h1.7v1.7h-1.7zM270.0 215.8h1.7v1.7h-1.7zM282.8 215.8h1.7v1.7h-1.7zM295.6 215.8h1.7v1.7h-1.7zM308.4 215.8h1.7v1.7h-1.7zM321.2 215.8h1.7v1.7h-1.7zM334.0 215.8h1.7v1.7h-1.7zM346.8 215.8h1.7v1.7h-1.7zM359.6 215.8h1.7v1.7h-1.7zM372.4 215.8h1.7v1.7h-1.7zM385.2 215.8h1.7v1.7h-1.7zM398.0 215.8h1.7v1.7h-1.7zM410.8 215.8h1.7v1.7h-1.7zM423.6 215.8h1.7v1.7h-1.7zM436.4 215.8h1.7v1.7h-1.7zM449.2 215.8h1.7v1.7h-1.7zM462.0 215.8h1.7v1.7h-1.7zM474.8 215.8h1.7v1.7h-1.7zM487.6 215.8h1.7v1.7h-1.7zM500.4 215.8h1.7v1.7h-1.7zM513.2 215.8h1.7v1.7h-1.7zM526.0 215.8h1.7v1.7h-1.7zM538.8 215.8h1.7v1.7h-1.7zM551.6 215.8h1.7v1.7h-1.7zM564.4 215.8h1.7v1.7h-1.7zM577.2 215.8h1.7v1.7h-1.7zM590.0 215.8h1.7v1.7h-1.7zM602.8 215.8h1.7v1.7h-1.7zM615.5 215.8h1.7v1.7h-1.7zM628.3 215.8h1.7v1.7h-1.7zM641.1 215.8h1.7v1.7h-1.7zM653.9 215.8h1.7v1.7h-1.7zM666.7 215.8h1.7v1.7h-1.7zM679.5 215.8h1.7v1.7h-1.7zM692.3 215.8h1.7v1.7h-1.7zM705.1 215.8h1.7v1.7h-1.7zM717.9 215.8h1.7v1.7h-1.7zM730.7 215.8h1.7v1.7h-1.7zM743.5 215.8h1.7v1.7h-1.7zM756.3 215.8h1.7v1.7h-1.7zM769.1 215.8h1.7v1.7h-1.7zM781.9 215.8h1.7v1.7h-1.7zM794.7 215.8h1.7v1.7h-1.7zM807.5 215.8h1.7v1.7h-1.7zM820.3 215.8h1.7v1.7h-1.7zM833.1 215.8h1.7v1.7h-1.7zM845.9 215.8h1.7v1.7h-1.7zM858.7 215.8h1.7v1.7h-1.7zM871.5 215.8h1.7v1.7h-1.7zM884.3 215.8h1.7v1.7h-1.7zM897.1 215.8h1.7v1.7h-1.7zM909.9 215.8h1.7v1.7h-1.7zM922.7 215.8h1.7v1.7h-1.7zM935.5 215.8h1.7v1.7h-1.7zM948.3 215.8h1.7v1.7h-1.7zM961.1 215.8h1.7v1.7h-1.7zM973.9 215.8h1.7v1.7h-1.7zM986.7 215.8h1.7v1.7h-1.7zM39.5 279.8h1.7v1.7h-1.7zM52.4 279.8h1.7v1.7h-1.7zM65.2 279.8h1.7v1.7h-1.7zM78.0 279.8h1.7v1.7h-1.7zM90.8 279.8h1.7v1.7h-1.7zM103.5 279.8h1.7v1.7h-1.7zM116.3 279.8h1.7v1.7h-1.7zM129.2 279.8h1.7v1.7h-1.7zM142.0 279.8h1.7v1.7h-1.7zM154.8 279.8h1.7v1.7h-1.7zM167.6 279.8h1.7v1.7h-1.7zM180.4 279.8h1.7v1.7h-1.7zM193.2 279.8h1.7v1.7h-1.7zM206.0 279.8h1.7v1.7h-1.7zM218.8 279.8h1.7v1.7h-1.7zM231.6 279.8h1.7v1.7h-1.7zM244.4 279.8h1.7v1.7h-1.7zM257.2 279.8h1.7v1.7h-1.7zM270.0 279.8h1.7v1.7h-1.7zM282.8 279.8h1.7v1.7h-1.7zM295.6 279.8h1.7v1.7h-1.7zM308.4 279.8h1.7v1.7h-1.7zM321.2 279.8h1.7v1.7h-1.7zM334.0 279.8h1.7v1.7h-1.7zM346.8 279.8h1.7v1.7h-1.7zM359.6 279.8h1.7v1.7h-1.7zM372.4 279.8h1.7v1.7h-1.7zM385.2 279.8h1.7v1.7h-1.7zM398.0 279.8h1.7v1.7h-1.7zM410.8 279.8h1.7v1.7h-1.7zM423.6 279.8h1.7v1.7h-1.7zM436.4 279.8h1.7v1.7h-1.7zM449.2 279.8h1.7v1.7h-1.7zM462.0 279.8h1.7v1.7h-1.7zM474.8 279.8h1.7v1.7h-1.7zM487.6 279.8h1.7v1.7h-1.7zM500.4 279.8h1.7v1.7h-1.7zM513.2 279.8h1.7v1.7h-1.7zM526.0 279.8h1.7v1.7h-1.7zM538.8 279.8h1.7v1.7h-1.7zM551.6 279.8h1.7v1.7h-1.7zM564.4 279.8h1.7v1.7h-1.7zM577.2 279.8h1.7v1.7h-1.7zM590.0 279.8h1.7v1.7h-1.7zM602.8 279.8h1.7v1.7h-1.7zM615.5 279.8h1.7v1.7h-1.7zM628.3 279.8h1.7v1.7h-1.7zM641.1 279.8h1.7v1.7h-1.7zM653.9 279.8h1.7v1.7h-1.7zM666.7 279.8h1.7v1.7h-1.7zM679.5 279.8h1.7v1.7h-1.7zM692.3 279.8h1.7v1.7h-1.7zM705.1 279.8h1.7v1.7h-1.7zM717.9 279.8h1.7v1.7h-1.7zM730.7 279.8h1.7v1.7h-1.7zM743.5 279.8h1.7v1.7h-1.7zM756.3 279.8h1.7v1.7h-1.7zM769.1 279.8h1.7v1.7h-1.7zM781.9 279.8h1.7v1.7h-1.7zM794.7 279.8h1.7v1.7h-1.7zM807.5 279.8h1.7v1.7h-1.7zM820.3 279.8h1.7v1.7h-1.7zM833.1 279.8h1.7v1.7h-1.7zM845.9 279.8h1.7v1.7h-1.7zM858.7 279.8h1.7v1.7h-1.7zM871.5 279.8h1.7v1.7h-1.7zM884.3 279.8h1.7v1.7h-1.7zM897.1 279.8h1.7v1.7h-1.7zM909.9 279.8h1.7v1.7h-1.7zM922.7 279.8h1.7v1.7h-1.7zM935.5 279.8h1.7v1.7h-1.7zM948.3 279.8h1.7v1.7h-1.7zM961.1 279.8h1.7v1.7h-1.7zM973.9 279.8h1.7v1.7h-1.7zM986.7 279.8h1.7v1.7h-1.7zM39.5 407.8h1.7v1.7h-1.7zM52.4 407.8h1.7v1.7h-1.7zM65.2 407.8h1.7v1.7h-1.7zM78.0 407.8h1.7v1.7h-1.7zM90.8 407.8h1.7v1.7h-1.7zM103.5 407.8h1.7v1.7h-1.7zM116.3 407.8h1.7v1.7h-1.7zM129.2 407.8h1.7v1.7h-1.7zM142.0 407.8h1.7v1.7h-1.7zM154.8 407.8h1.7v1.7h-1.7zM167.6 407.8h1.7v1.7h-1.7zM180.4 407.8h1.7v1.7h-1.7zM193.2 407.8h1.7v1.7h-1.7zM206.0 407.8h1.7v1.7h-1.7zM218.8 407.8h1.7v1.7h-1.7zM231.6 407.8h1.7v1.7h-1.7zM244.4 407.8h1.7v1.7h-1.7zM257.2 407.8h1.7v1.7h-1.7zM270.0 407.8h1.7v1.7h-1.7zM282.8 407.8h1.7v1.7h-1.7zM295.6 407.8h1.7v1.7h-1.7zM308.4 407.8h1.7v1.7h-1.7zM321.2 407.8h1.7v1.7h-1.7zM334.0 407.8h1.7v1.7h-1.7zM346.8 407.8h1.7v1.7h-1.7zM359.6 407.8h1.7v1.7h-1.7zM372.4 407.8h1.7v1.7h-1.7zM385.2 407.8h1.7v1.7h-1.7zM398.0 407.8h1.7v1.7h-1.7zM410.8 407.8h1.7v1.7h-1.7zM423.6 407.8h1.7v1.7h-1.7zM436.4 407.8h1.7v1.7h-1.7zM449.2 407.8h1.7v1.7h-1.7zM462.0 407.8h1.7v1.7h-1.7zM474.8 407.8h1.7v1.7h-1.7zM487.6 407.8h1.7v1.7h-1.7zM500.4 407.8h1.7v1.7h-1.7zM513.2 407.8h1.7v1.7h-1.7zM526.0 407.8h1.7v1.7h-1.7zM538.8 407.8h1.7v1.7h-1.7zM551.6 407.8h1.7v1.7h-1.7zM564.4 407.8h1.7v1.7h-1.7zM577.2 407.8h1.7v1.7h-1.7zM590.0 407.8h1.7v1.7h-1.7zM602.8 407.8h1.7v1.7h-1.7zM615.5 407.8h1.7v1.7h-1.7zM628.3 407.8h1.7v1.7h-1.7zM641.1 407.8h1.7v1.7h-1.7zM653.9 407.8h1.7v1.7h-1.7zM666.7 407.8h1.7v1.7h-1.7zM679.5 407.8h1.7v1.7h-1.7zM692.3 407.8h1.7v1.7h-1.7zM705.1 407.8h1.7v1.7h-1.7zM717.9 407.8h1.7v1.7h-1.7zM730.7 407.8h1.7v1.7h-1.7zM743.5 407.8h1.7v1.7h-1.7zM756.3 407.8h1.7v1.7h-1.7zM769.1 407.8h1.7v1.7h-1.7zM781.9 407.8h1.7v1.7h-1.7zM794.7 407.8h1.7v1.7h-1.7zM807.5 407.8h1.7v1.7h-1.7zM820.3 407.8h1.7v1.7h-1.7zM833.1 407.8h1.7v1.7h-1.7zM845.9 407.8h1.7v1.7h-1.7zM858.7 407.8h1.7v1.7h-1.7zM871.5 407.8h1.7v1.7h-1.7zM884.3 407.8h1.7v1.7h-1.7zM897.1 407.8h1.7v1.7h-1.7zM909.9 407.8h1.7v1.7h-1.7zM922.7 407.8h1.7v1.7h-1.7zM935.5 407.8h1.7v1.7h-1.7zM948.3 407.8h1.7v1.7h-1.7zM961.1 407.8h1.7v1.7h-1.7zM973.9 407.8h1.7v1.7h-1.7zM986.7 407.8h1.7v1.7h-1.7zM39.5 471.8h1.7v1.7h-1.7zM52.4 471.8h1.7v1.7h-1.7zM65.2 471.8h1.7v1.7h-1.7zM78.0 471.8h1.7v1.7h-1.7zM90.8 471.8h1.7v1.7h-1.7zM103.5 471.8h1.7v1.7h-1.7zM116.3 471.8h1.7v1.7h-1.7zM129.2 471.8h1.7v1.7h-1.7zM142.0 471.8h1.7v1.7h-1.7zM154.8 471.8h1.7v1.7h-1.7zM167.6 471.8h1.7v1.7h-1.7zM180.4 471.8h1.7v1.7h-1.7zM193.2 471.8h1.7v1.7h-1.7zM206.0 471.8h1.7v1.7h-1.7zM218.8 471.8h1.7v1.7h-1.7zM231.6 471.8h1.7v1.7h-1.7zM244.4 471.8h1.7v1.7h-1.7zM257.2 471.8h1.7v1.7h-1.7zM270.0 471.8h1.7v1.7h-1.7zM282.8 471.8h1.7v1.7h-1.7zM295.6 471.8h1.7v1.7h-1.7zM308.4 471.8h1.7v1.7h-1.7zM321.2 471.8h1.7v1.7h-1.7zM334.0 471.8h1.7v1.7h-1.7zM346.8 471.8h1.7v1.7h-1.7zM359.6 471.8h1.7v1.7h-1.7zM372.4 471.8h1.7v1.7h-1.7zM385.2 471.8h1.7v1.7h-1.7zM398.0 471.8h1.7v1.7h-1.7zM410.8 471.8h1.7v1.7h-1.7zM423.6 471.8h1.7v1.7h-1.7zM436.4 471.8h1.7v1.7h-1.7zM449.2 471.8h1.7v1.7h-1.7zM462.0 471.8h1.7v1.7h-1.7zM474.8 471.8h1.7v1.7h-1.7zM487.6 471.8h1.7v1.7h-1.7zM500.4 471.8h1.7v1.7h-1.7zM513.2 471.8h1.7v1.7h-1.7zM526.0 471.8h1.7v1.7h-1.7zM538.8 471.8h1.7v1.7h-1.7zM551.6 471.8h1.7v1.7h-1.7zM564.4 471.8h1.7v1.7h-1.7zM577.2 471.8h1.7v1.7h-1.7zM590.0 471.8h1.7v1.7h-1.7zM602.8 471.8h1.7v1.7h-1.7zM615.5 471.8h1.7v1.7h-1.7zM628.3 471.8h1.7v1.7h-1.7zM641.1 471.8h1.7v1.7h-1.7zM653.9 471.8h1.7v1.7h-1.7zM666.7 471.8h1.7v1.7h-1.7zM679.5 471.8h1.7v1.7h-1.7zM692.3 471.8h1.7v1.7h-1.7zM705.1 471.8h1.7v1.7h-1.7zM717.9 471.8h1.7v1.7h-1.7zM730.7 471.8h1.7v1.7h-1.7zM743.5 471.8h1.7v1.7h-1.7zM756.3 471.8h1.7v1.7h-1.7zM769.1 471.8h1.7v1.7h-1.7zM781.9 471.8h1.7v1.7h-1.7zM794.7 471.8h1.7v1.7h-1.7zM807.5 471.8h1.7v1.7h-1.7zM820.3 471.8h1.7v1.7h-1.7zM833.1 471.8h1.7v1.7h-1.7zM845.9 471.8h1.7v1.7h-1.7zM858.7 471.8h1.7v1.7h-1.7zM871.5 471.8h1.7v1.7h-1.7zM884.3 471.8h1.7v1.7h-1.7zM897.1 471.8h1.7v1.7h-1.7zM909.9 471.8h1.7v1.7h-1.7zM922.7 471.8h1.7v1.7h-1.7zM935.5 471.8h1.7v1.7h-1.7zM948.3 471.8h1.7v1.7h-1.7zM961.1 471.8h1.7v1.7h-1.7zM973.9 471.8h1.7v1.7h-1.7zM986.7 471.8h1.7v1.7h-1.7zM39.5 535.8h1.7v1.7h-1.7zM52.4 535.8h1.7v1.7h-1.7zM65.2 535.8h1.7v1.7h-1.7zM78.0 535.8h1.7v1.7h-1.7zM90.8 535.8h1.7v1.7h-1.7zM103.5 535.8h1.7v1.7h-1.7zM116.3 535.8h1.7v1.7h-1.7zM129.2 535.8h1.7v1.7h-1.7zM142.0 535.8h1.7v1.7h-1.7zM154.8 535.8h1.7v1.7h-1.7zM167.6 535.8h1.7v1.7h-1.7zM180.4 535.8h1.7v1.7h-1.7zM193.2 535.8h1.7v1.7h-1.7zM206.0 535.8h1.7v1.7h-1.7zM218.8 535.8h1.7v1.7h-1.7zM231.6 535.8h1.7v1.7h-1.7zM244.4 535.8h1.7v1.7h-1.7zM257.2 535.8h1.7v1.7h-1.7zM270.0 535.8h1.7v1.7h-1.7zM282.8 535.8h1.7v1.7h-1.7zM295.6 535.8h1.7v1.7h-1.7zM308.4 535.8h1.7v1.7h-1.7zM321.2 535.8h1.7v1.7h-1.7zM334.0 535.8h1.7v1.7h-1.7zM346.8 535.8h1.7v1.7h-1.7zM359.6 535.8h1.7v1.7h-1.7zM372.4 535.8h1.7v1.7h-1.7zM385.2 535.8h1.7v1.7h-1.7zM398.0 535.8h1.7v1.7h-1.7zM410.8 535.8h1.7v1.7h-1.7zM423.6 535.8h1.7v1.7h-1.7zM436.4 535.8h1.7v1.7h-1.7zM449.2 535.8h1.7v1.7h-1.7zM462.0 535.8h1.7v1.7h-1.7zM474.8 535.8h1.7v1.7h-1.7zM487.6 535.8h1.7v1.7h-1.7zM500.4 535.8h1.7v1.7h-1.7zM513.2 535.8h1.7v1.7h-1.7zM526.0 535.8h1.7v1.7h-1.7zM538.8 535.8h1.7v1.7h-1.7zM551.6 535.8h1.7v1.7h-1.7zM564.4 535.8h1.7v1.7h-1.7zM577.2 535.8h1.7v1.7h-1.7zM590.0 535.8h1.7v1.7h-1.7zM602.8 535.8h1.7v1.7h-1.7zM615.5 535.8h1.7v1.7h-1.7zM628.3 535.8h1.7v1.7h-1.7zM641.1 535.8h1.7v1.7h-1.7zM653.9 535.8h1.7v1.7h-1.7zM666.7 535.8h1.7v1.7h-1.7zM679.5 535.8h1.7v1.7h-1.7zM692.3 535.8h1.7v1.7h-1.7zM705.1 535.8h1.7v1.7h-1.7zM717.9 535.8h1.7v1.7h-1.7zM730.7 535.8h1.7v1.7h-1.7zM743.5 535.8h1.7v1.7h-1.7zM756.3 535.8h1.7v1.7h-1.7zM769.1 535.8h1.7v1.7h-1.7zM781.9 535.8h1.7v1.7h-1.7zM794.7 535.8h1.7v1.7h-1.7zM807.5 535.8h1.7v1.7h-1.7zM820.3 535.8h1.7v1.7h-1.7zM833.1 535.8h1.7v1.7h-1.7zM845.9 535.8h1.7v1.7h-1.7zM858.7 535.8h1.7v1.7h-1.7zM871.5 535.8h1.7v1.7h-1.7zM884.3 535.8h1.7v1.7h-1.7zM897.1 535.8h1.7v1.7h-1.7zM909.9 535.8h1.7v1.7h-1.7zM922.7 535.8h1.7v1.7h-1.7zM935.5 535.8h1.7v1.7h-1.7zM948.3 535.8h1.7v1.7h-1.7zM961.1 535.8h1.7v1.7h-1.7zM973.9 535.8h1.7v1.7h-1.7zM986.7 535.8h1.7v1.7h-1.7zM39.5 599.8h1.7v1.7h-1.7zM52.4 599.8h1.7v1.7h-1.7zM65.2 599.8h1.7v1.7h-1.7zM78.0 599.8h1.7v1.7h-1.7zM90.8 599.8h1.7v1.7h-1.7zM103.5 599.8h1.7v1.7h-1.7zM116.3 599.8h1.7v1.7h-1.7zM129.2 599.8h1.7v1.7h-1.7zM142.0 599.8h1.7v1.7h-1.7zM154.8 599.8h1.7v1.7h-1.7zM167.6 599.8h1.7v1.7h-1.7zM180.4 599.8h1.7v1.7h-1.7zM193.2 599.8h1.7v1.7h-1.7zM206.0 599.8h1.7v1.7h-1.7zM218.8 599.8h1.7v1.7h-1.7zM231.6 599.8h1.7v1.7h-1.7zM244.4 599.8h1.7v1.7h-1.7zM257.2 599.8h1.7v1.7h-1.7zM270.0 599.8h1.7v1.7h-1.7zM282.8 599.8h1.7v1.7h-1.7zM295.6 599.8h1.7v1.7h-1.7zM308.4 599.8h1.7v1.7h-1.7zM321.2 599.8h1.7v1.7h-1.7zM334.0 599.8h1.7v1.7h-1.7zM346.8 599.8h1.7v1.7h-1.7zM359.6 599.8h1.7v1.7h-1.7zM372.4 599.8h1.7v1.7h-1.7zM385.2 599.8h1.7v1.7h-1.7zM398.0 599.8h1.7v1.7h-1.7zM410.8 599.8h1.7v1.7h-1.7zM423.6 599.8h1.7v1.7h-1.7zM436.4 599.8h1.7v1.7h-1.7zM449.2 599.8h1.7v1.7h-1.7zM462.0 599.8h1.7v1.7h-1.7zM474.8 599.8h1.7v1.7h-1.7zM487.6 599.8h1.7v1.7h-1.7zM500.4 599.8h1.7v1.7h-1.7zM513.2 599.8h1.7v1.7h-1.7zM526.0 599.8h1.7v1.7h-1.7zM538.8 599.8h1.7v1.7h-1.7zM551.6 599.8h1.7v1.7h-1.7zM564.4 599.8h1.7v1.7h-1.7zM577.2 599.8h1.7v1.7h-1.7zM590.0 599.8h1.7v1.7h-1.7zM602.8 599.8h1.7v1.7h-1.7zM615.5 599.8h1.7v1.7h-1.7zM628.3 599.8h1.7v1.7h-1.7zM641.1 599.8h1.7v1.7h-1.7zM653.9 599.8h1.7v1.7h-1.7zM666.7 599.8h1.7v1.7h-1.7zM679.5 599.8h1.7v1.7h-1.7zM692.3 599.8h1.7v1.7h-1.7zM705.1 599.8h1.7v1.7h-1.7zM717.9 599.8h1.7v1.7h-1.7zM730.7 599.8h1.7v1.7h-1.7zM743.5 599.8h1.7v1.7h-1.7zM756.3 599.8h1.7v1.7h-1.7zM769.1 599.8h1.7v1.7h-1.7zM781.9 599.8h1.7v1.7h-1.7zM794.7 599.8h1.7v1.7h-1.7zM807.5 599.8h1.7v1.7h-1.7zM820.3 599.8h1.7v1.7h-1.7zM833.1 599.8h1.7v1.7h-1.7zM845.9 599.8h1.7v1.7h-1.7zM858.7 599.8h1.7v1.7h-1.7zM871.5 599.8h1.7v1.7h-1.7zM884.3 599.8h1.7v1.7h-1.7zM897.1 599.8h1.7v1.7h-1.7zM909.9 599.8h1.7v1.7h-1.7zM922.7 599.8h1.7v1.7h-1.7zM935.5 599.8h1.7v1.7h-1.7zM948.3 599.8h1.7v1.7h-1.7zM961.1 599.8h1.7v1.7h-1.7zM973.9 599.8h1.7v1.7h-1.7zM986.7 599.8h1.7v1.7h-1.7z" fill="#8a8a8a"/>
<path d="M512.0 36.6h4v1.6h-4zM512.0 49.4h4v1.6h-4zM512.0 62.2h4v1.6h-4zM512.0 75.0h4v1.6h-4zM512.0 87.8h4v1.6h-4zM512.0 100.6h4v1.6h-4zM512.0 113.4h4v1.6h-4zM512.0 126.2h4v1.6h-4zM512.0 139.0h4v1.6h-4zM512.0 151.8h4v1.6h-4zM512.0 164.6h4v1.6h-4zM512.0 177.4h4v1.6h-4zM512.0 190.2h4v1.6h-4zM512.0 203.0h4v1.6h-4zM512.0 215.8h4v1.6h-4zM512.0 228.6h4v1.6h-4zM512.0 241.4h4v1.6h-4zM512.0 254.2h4v1.6h-4zM512.0 267.0h4v1.6h-4zM512.0 279.8h4v1.6h-4zM512.0 292.6h4v1.6h-4zM512.0 305.4h4v1.6h-4zM512.0 318.2h4v1.6h-4zM512.0 331.0h4v1.6h-4zM512.0 343.8h4v1.6h-4zM512.0 356.6h4v1.6h-4zM512.0 369.4h4v1.6h-4zM512.0 382.2h4v1.6h-4zM512.0 395.0h4v1.6h-4zM512.0 407.8h4v1.6h-4zM512.0 420.6h4v1.6h-4zM512.0 433.4h4v1.6h-4zM512.0 446.2h4v1.6h-4zM512.0 459.0h4v1.6h-4zM512.0 471.8h4v1.6h-4zM512.0 484.6h4v1.6h-4zM512.0 497.4h4v1.6h-4zM512.0 510.2h4v1.6h-4zM512.0 523.0h4v1.6h-4zM512.0 535.8h4v1.6h-4zM512.0 548.6h4v1.6h-4zM512.0 561.4h4v1.6h-4zM512.0 574.2h4v1.6h-4zM512.0 587.0h4v1.6h-4zM512.0 599.8h4v1.6h-4zM512.0 612.6h4v1.6h-4zM512.0 625.4h4v1.6h-4zM512.0 638.2h4v1.6h-4zM512.0 651.0h4v1.6h-4zM39.6 342.6h1.6v4h-1.6zM52.4 342.6h1.6v4h-1.6zM65.2 342.6h1.6v4h-1.6zM78.0 342.6h1.6v4h-1.6zM90.8 342.6h1.6v4h-1.6zM103.6 342.6h1.6v4h-1.6zM116.4 342.6h1.6v4h-1.6zM129.2 342.6h1.6v4h-1.6zM142.0 342.6h1.6v4h-1.6zM154.8 342.6h1.6v4h-1.6zM167.6 342.6h1.6v4h-1.6zM180.4 342.6h1.6v4h-1.6zM193.2 342.6h1.6v4h-1.6zM206.0 342.6h1.6v4h-1.6zM218.8 342.6h1.6v4h-1.6zM231.6 342.6h1.6v4h-1.6zM244.4 342.6h1.6v4h-1.6zM257.2 342.6h1.6v4h-1.6zM270.0 342.6h1.6v4h-1.6zM282.8 342.6h1.6v4h-1.6zM295.6 342.6h1.6v4h-1.6zM308.4 342.6h1.6v4h-1.6zM321.2 342.6h1.6v4h-1.6zM334.0 342.6h1.6v4h-1.6zM346.8 342.6h1.6v4h-1.6zM359.6 342.6h1.6v4h-1.6zM372.4 342.6h1.6v4h-1.6zM385.2 342.6h1.6v4h-1.6zM398.0 342.6h1.6v4h-1.6zM410.8 342.6h1.6v4h-1.6zM423.6 342.6h1.6v4h-1.6zM436.4 342.6h1.6v4h-1.6zM449.2 342.6h1.6v4h-1.6zM462.0 342.6h1.6v4h-1.6zM474.8 342.6h1.6v4h-1.6zM487.6 342.6h1.6v4h-1.6zM500.4 342.6h1.6v4h-1.6zM513.2 342.6h1.6v4h-1.6zM526.0 342.6h1.6v4h-1.6zM538.8 342.6h1.6v4h-1.6zM551.6 342.6h1.6v4h-1.6zM564.4 342.6h1.6v4h-1.6zM577.2 342.6h1.6v4h-1.6zM590.0 342.6h1.6v4h-1.6zM602.8 342.6h1.6v4h-1.6zM615.6 342.6h1.6v4h-1.6zM628.4 342.6h1.6v4h-1.6zM641.2 342.6h1.6v4h-1.6zM654.0 342.6h1.6v4h-1.6zM666.8 342.6h1.6v4h-1.6zM679.6 342.6h1.6v4h-1.6zM692.4 342.6h1.6v4h-1.6zM705.2 342.6h1.6v4h-1.6zM718.0 342.6h1.6v4h-1.6zM730.8 342.6h1.6v4h-1.6zM743.6 342.6h1.6v4h-1.6zM756.4 342.6h1.6v4h-1.6zM769.2 342.6h1.6v4h-1.6zM782.0 342.6h1.6v4h-1.6zM794.8 342.6h1.6v4h-1.6zM807.6 342.6h1.6v4h-1.6zM820.4 342.6h1.6v4h-1.6zM833.2 342.6h1.6v4h-1.6zM846.0 342.6h1.6v4h-1.6zM858.8 342.6h1.6v4h-1.6zM871.6 342.6h1.6v4h-1.6zM884.4 342.6h1.6v4h-1.6zM897.2 342.6h1.6v4h-1.6zM910.0 342.6h1.6v4h-1.6zM922.8 342.6h1.6v4h-1.6zM935.6 342.6h1.6v4h-1.6zM948.4 342.6h1.6v4h-1.6zM961.2 342.6h1.6v4h-1.6zM974.0 342.6h1.6v4h-1.6zM986.8 342.6h1.6v4h-1.6z" fill="#d0d0d0"/>
<path d="M39.6 27h1.6v2.5h-1.6zM39.6 659.5h1.6v2.5h-1.6zM52.4 27h1.6v2.5h-1.6zM52.4 659.5h1.6v2.5h-1.6zM65.2 27h1.6v6h-1.6zM65.2 656h1.6v6h-1.6zM78.0 27h1.6v2.5h-1.6zM78.0 659.5h1.6v2.5h-1.6zM90.8 27h1.6v2.5h-1.6zM90.8 659.5h1.6v2.5h-1.6zM103.6 27h1.6v2.5h-1.6zM103.6 659.5h1.6v2.5h-1.6zM116.4 27h1.6v2.5h-1.6zM116.4 659.5h1.6v2.5h-1.6zM129.2 27h1.6v6h-1.6zM129.2 656h1.6v6h-1.6zM142.0 27h1.6v2.5h-1.6zM142.0 659.5h1.6v2.5h-1.6zM154.8 27h1.6v2.5h-1.6zM154.8 659.5h1.6v2.5h-1.6zM167.6 27h1.6v2.5h-1.6zM167.6 659.5h1.6v2.5h-1.6zM180.4 27h1.6v2.5h-1.6zM180.4 659.5h1.6v2.5h-1.6zM193.2 27h1.6v6h-1.6zM193.2 656h1.6v6h-1.6zM206.0 27h1.6v2.5h-1.6zM206.0 659.5h1.6v2.5h-1.6zM218.8 27h1.6v2.5h-1.6zM218.8 659.5h1.6v2.5h-1.6zM231.6 27h1.6v2.5h-1.6zM231.6 659.5h1.6v2.5h-1.6zM244.4 27h1.6v2.5h-1.6zM244.4 659.5h1.6v2.5h-1.6zM257.2 27h1.6v6h-1.6zM257.2 656h1.6v6h-1.6zM270.0 27h1.6v2.5h-1.6zM270.0 659.5h1.6v2.5h-1.6zM282.8 27h1.6v2.5h-1.6zM282.8 659.5h1.6v2.5h-1.6zM295.6 27h1.6v2.5h-1.6zM295.6 659.5h1.6v2.5h-1.6zM308.4 27h1.6v2.5h-1.6zM308.4 659.5h1.6v2.5h-1.6zM321.2 27h1.6v6h-1.6zM321.2 656h1.6v6h-1.6zM334.0 27h1.6v2.5h-1.6zM334.0 659.5h1.6v2.5h-1.6zM346.8 27h1.6v2.5h-1.6zM346.8 659.5h1.6v2.5h-1.6zM359.6 27h1.6v2.5h-1.6zM359.6 659.5h1.6v2.5h-1.6zM372.4 27h1.6v2.5h-1.6zM372.4 659.5h1.6v2.5h-1.6zM385.2 27h1.6v6h-1.6zM385.2 656h1.6v6h-1.6zM398.0 27h1.6v2.5h-1.6zM398.0 659.5h1.6v2.5h-1.6zM410.8 27h1.6v2.5h-1.6zM410.8 659.5h1.6v2.5h-1.6zM423.6 27h1.6v2.5h-1.6zM423.6 659.5h1.6v2.5h-1.6zM436.4 27h1.6v2.5h-1.6zM436.4 659.5h1.6v2.5h-1.6zM449.2 27h1.6v6h-1.6zM449.2 656h1.6v6h-1.6zM462.0 27h1.6v2.5h-1.6zM462.0 659.5h1.6v2.5h-1.6zM474.8 27h1.6v2.5h-1.6zM474.8 659.5h1.6v2.5h-1.6zM487.6 27h1.6v2.5h-1.6zM487.6 659.5h1.6v2.5h-1.6zM500.4 27h1.6v2.5h-1.6zM500.4 659.5h1.6v2.5h-1.6zM513.2 27h1.6v6h-1.6zM513.2 656h1.6v6h-1.6zM526.0 27h1.6v2.5h-1.6zM526.0 659.5h1.6v2.5h-1.6zM538.8 27h1.6v2.5h-1.6zM538.8 659.5h1.6v2.5h-1.6zM551.6 27h1.6v2.5h-1.6zM551.6 659.5h1.6v2.5h-1.6zM564.4 27h1.6v2.5h-1.6zM564.4 659.5h1.6v2.5h-1.6zM577.2 27h1.6v6h-1.6zM577.2 656h1.6v6h-1.6zM590.0 27h1.6v2.5h-1.6zM590.0 659.5h1.6v2.5h-1.6zM602.8 27h1.6v2.5h-1.6zM602.8 659.5h1.6v2.5h-1.6zM615.6 27h1.6v2.5h-1.6zM615.6 659.5h1.6v2.5h-1.6zM628.4 27h1.6v2.5h-1.6zM628.4 659.5h1.6v2.5h-1.6zM641.2 27h1.6v6h-1.6zM641.2 656h1.6v6h-1.6zM654.0 27h1.6v2.5h-1.6zM654.0 659.5h1.6v2.5h-1.6zM666.8 27h1.6v2.5h-1.6zM666.8 659.5h1.6v2.5h-1.6zM679.6 27h1.6v2.5h-1.6zM679.6 659.5h1.6v2.5h-1.6zM692.4 27h1.6v2.5h-1.6zM692.4 659.5h1.6v2.5h-1.6zM705.2 27h1.6v6h-1.6zM705.2 656h1.6v6h-1.6zM718.0 27h1.6v2.5h-1.6zM718.0 659.5h1.6v2.5h-1.6zM730.8 27h1.6v2.5h-1.6zM730.8 659.5h1.6v2.5h-1.6zM743.6 27h1.6v2.5h-1.6zM743.6 659.5h1.6v2.5h-1.6zM756.4 27h1.6v2.5h-1.6zM756.4 659.5h1.6v2.5h-1.6zM769.2 27h1.6v6h-1.6zM769.2 656h1.6v6h-1.6zM782.0 27h1.6v2.5h-1.6zM782.0 659.5h1.6v2.5h-1.6zM794.8 27h1.6v2.5h-1.6zM794.8 659.5h1.6v2.5h-1.6zM807.6 27h1.6v2.5h-1.6zM807.6 659.5h1.6v2.5h-1.6zM820.4 27h1.6v2.5h-1.6zM820.4 659.5h1.6v2.5h-1.6zM833.2 27h1.6v6h-1.6zM833.2 656h1.6v6h-1.6zM846.0 27h1.6v2.5h-1.6zM846.0 659.5h1.6v2.5h-1.6zM858.8 27h1.6v2.5h-1.6zM858.8 659.5h1.6v2.5h-1.6zM871.6 27h1.6v2.5h-1.6zM871.6 659.5h1.6v2.5h-1.6zM884.4 27h1.6v2.5h-1.6zM884.4 659.5h1.6v2.5h-1.6zM897.2 27h1.6v6h-1.6zM897.2 656h1.6v6h-1.6zM910.0 27h1.6v2.5h-1.6zM910.0 659.5h1.6v2.5h-1.6zM922.8 27h1.6v2.5h-1.6zM922.8 659.5h1.6v2.5h-1.6zM935.6 27h1.6v2.5h-1.6zM935.6 659.5h1.6v2.5h-1.6zM948.4 27h1.6v2.5h-1.6zM948.4 659.5h1.6v2.5h-1.6zM961.2 27h1.6v6h-1.6zM961.2 656h1.6v6h-1.6zM974.0 27h1.6v2.5h-1.6zM974.0 659.5h1.6v2.5h-1.6zM986.8 27h1.6v2.5h-1.6zM986.8 659.5h1.6v2.5h-1.6zM28 36.6h4v1.6h-4zM991 36.6h4v1.6h-4zM28 49.4h4v1.6h-4zM991 49.4h4v1.6h-4zM28 62.2h4v1.6h-4zM991 62.2h4v1.6h-4zM28 75.0h4v1.6h-4zM991 75.0h4v1.6h-4zM28 87.8h8v1.6h-8zM987 87.8h8v1.6h-8zM28 100.6h4v1.6h-4zM991 100.6h4v1.6h-4zM28 113.4h4v1.6h-4zM991 113.4h4v1.6h-4zM28 126.2h4v1.6h-4zM991 126.2h4v1.6h-4zM28 139.0h4v1.6h-4zM991 139.0h4v1.6h-4zM28 151.8h8v1.6h-8zM987 151.8h8v1.6h-8zM28 164.6h4v1.6h-4zM991 164.6h4v1.6h-4zM28 177.4h4v1.6h-4zM991 177.4h4v1.6h-4zM28 190.2h4v1.6h-4zM991 190.2h4v1.6h-4zM28 203.0h4v1.6h-4zM991 203.0h4v1.6h-4zM28 215.8h8v1.6h-8zM987 215.8h8v1.6h-8zM28 228.6h4v1.6h-4zM991 228.6h4v1.6h-4zM28 241.4h4v1.6h-4zM991 241.4h4v1.6h-4zM28 254.2h4v1.6h-4zM991 254.2h4v1.6h-4zM28 267.0h4v1.6h-4zM991 267.0h4v1.6h-4zM28 279.8h8v1.6h-8zM987 279.8h8v1.6h-8zM28 292.6h4v1.6h-4zM991 292.6h4v1.6h-4zM28 305.4h4v1.6h-4zM991 305.4h4v1.6h-4zM28 318.2h4v1.6h-4zM991 318.2h4v1.6h-4zM28 331.0h4v1.6h-4zM991 331.0h4v1.6h-4zM28 343.8h8v1.6h-8zM987 343.8h8v1.6h-8zM28 356.6h4v1.6h-4zM991 356.6h4v1.6h-4zM28 369.4h4v1.6h-4zM991 369.4h4v1.6h-4zM28 382.2h4v1.6h-4zM991 382.2h4v1.6h-4zM28 395.0h4v1.6h-4zM991 395.0h4v1.6h-4zM28 407.8h8v1.6h-8zM987 407.8h8v1.6h-8zM28 420.6h4v1.6h-4zM991 420.6h4v1.6h-4zM28 433.4h4v1.6h-4zM991 433.4h4v1.6h-4zM28 446.2h4v1.6h-4zM991 446.2h4v1.6h-4zM28 459.0h4v1.6h-4zM991 459.0h4v1.6h-4zM28 471.8h8v1.6h-8zM987 471.8h8v1.6h-8zM28 484.6h4v1.6h-4zM991 484.6h4v1.6h-4zM28 497.4h4v1.6h-4zM991 497.4h4v1.6h-4zM28 510.2h4v1.6h-4zM991 510.2h4v1.6h-4zM28 523.0h4v1.6h-4zM991 523.0h4v1.6h-4zM28 535.8h8v1.6h-8zM987 535.8h8v1.6h-8zM28 548.6h4v1.6h-4zM991 548.6h4v1.6h-4zM28 561.4h4v1.6h-4zM991 561.4h4v1.6h-4zM28 574.2h4v1.6h-4zM991 574.2h4v1.6h-4zM28 587.0h4v1.6h-4zM991 587.0h4v1.6h-4zM28 599.8h8v1.6h-8zM987 599.8h8v1.6h-8zM28 612.6h4v1.6h-4zM991 612.6h4v1.6h-4zM28 625.4h4v1.6h-4zM991 625.4h4v1.6h-4zM28 638.2h4v1.6h-4zM991 638.2h4v1.6h-4zM28 651.0h4v1.6h-4zM991 651.0h4v1.6h-4z" fill="#e8e8e8"/>
<rect x="193.3" y="337.5" width="1.4" height="14.4" fill="#d8d8d8"/><rect x="833.3" y="337.5" width="1.4" height="14.4" fill="#d8d8d8"/>
<rect x="28" y="343.6" width="967" height="3.2" fill="#f00010"/>
<path d="M32.3 346.8h1.8v1.3h-1.8zM37.5 340.8h1.8v2.8h-1.8zM37.5 346.8h1.8v1.6h-1.8zM39.9 342.2h1.8v1.4h-1.8zM39.9 346.8h1.8v2.0h-1.8zM45.1 341.3h1.8v2.3h-1.8zM45.1 346.8h1.8v2.9h-1.8zM50.3 342.0h1.8v1.6h-1.8zM50.3 346.8h1.8v2.2h-1.8zM53.5 342.2h1.8v1.4h-1.8zM53.5 346.8h1.8v1.8h-1.8zM56.7 342.1h1.8v1.5h-1.8zM56.7 346.8h1.8v1.4h-1.8zM59.1 341.5h1.8v2.1h-1.8zM59.1 346.8h1.8v2.2h-1.8zM62.9 341.7h1.8v1.9h-1.8zM66.1 346.8h1.8v1.6h-1.8zM71.3 341.8h1.8v1.8h-1.8zM71.3 346.8h1.8v2.0h-1.8zM76.5 346.8h1.8v2.0h-1.8zM80.3 342.3h1.8v1.3h-1.8zM80.3 346.8h1.8v2.4h-1.8zM85.5 341.8h1.8v1.8h-1.8zM89.3 341.6h1.8v2.0h-1.8zM89.3 346.8h1.8v2.7h-1.8zM93.1 342.3h1.8v1.3h-1.8zM93.1 346.8h1.8v2.5h-1.8zM105.9 342.1h1.8v1.5h-1.8zM105.9 346.8h1.8v1.4h-1.8zM108.3 341.1h1.8v2.5h-1.8zM108.3 346.8h1.8v1.9h-1.8zM112.8 341.4h1.8v2.2h-1.8zM112.8 346.8h1.8v2.8h-1.8zM117.3 346.8h1.8v1.9h-1.8zM121.1 342.0h1.8v1.6h-1.8zM121.1 346.8h1.8v1.3h-1.8zM124.3 341.5h1.8v2.1h-1.8zM124.3 346.8h1.8v2.3h-1.8zM128.1 341.4h1.8v2.2h-1.8zM128.1 346.8h1.8v2.3h-1.8zM131.9 346.8h1.8v2.1h-1.8zM137.1 341.6h1.8v2.0h-1.8zM142.3 342.2h1.8v1.4h-1.8zM142.3 346.8h1.8v2.3h-1.8zM144.7 341.6h1.8v2.0h-1.8zM147.1 342.4h1.8v1.2h-1.8zM147.1 346.8h1.8v1.5h-1.8zM149.5 346.8h1.8v1.3h-1.8zM152.7 341.9h1.8v1.7h-1.8zM152.7 346.8h1.8v1.8h-1.8zM156.5 341.5h1.8v2.1h-1.8zM156.5 346.8h1.8v3.0h-1.8zM161.0 342.2h1.8v1.4h-1.8zM161.0 346.8h1.8v1.8h-1.8zM164.8 341.5h1.8v2.1h-1.8zM164.8 346.8h1.8v1.6h-1.8zM170.0 340.8h1.8v2.8h-1.8zM170.0 346.8h1.8v2.6h-1.8zM177.6 341.8h1.8v1.8h-1.8zM180.8 341.8h1.8v1.8h-1.8zM184.0 341.0h1.8v2.6h-1.8zM190.4 341.1h1.8v2.5h-1.8zM190.4 346.8h1.8v3.0h-1.8zM194.2 341.3h1.8v2.3h-1.8zM194.2 346.8h1.8v1.8h-1.8zM198.0 346.8h1.8v1.6h-1.8zM201.2 341.5h1.8v2.1h-1.8zM201.2 346.8h1.8v3.0h-1.8zM206.4 346.8h1.8v2.4h-1.8zM208.8 346.8h1.8v1.9h-1.8zM212.0 341.0h1.8v2.6h-1.8zM212.0 346.8h1.8v1.8h-1.8zM216.5 342.2h1.8v1.4h-1.8zM219.7 342.1h1.8v1.5h-1.8zM219.7 346.8h1.8v2.8h-1.8zM222.9 341.5h1.8v2.1h-1.8zM222.9 346.8h1.8v2.9h-1.8zM226.1 342.4h1.8v1.2h-1.8zM226.1 346.8h1.8v2.9h-1.8zM228.5 341.6h1.8v2.0h-1.8zM231.7 346.8h1.8v1.7h-1.8zM235.5 341.8h1.8v1.8h-1.8zM240.7 340.8h1.8v2.8h-1.8zM240.7 346.8h1.8v1.8h-1.8zM245.2 341.5h1.8v2.1h-1.8zM250.4 341.5h1.8v2.1h-1.8zM250.4 346.8h1.8v2.8h-1.8zM253.6 342.1h1.8v1.5h-1.8zM256.8 341.4h1.8v2.2h-1.8zM260.6 341.5h1.8v2.1h-1.8zM260.6 346.8h1.8v2.6h-1.8zM265.8 342.3h1.8v1.3h-1.8zM265.8 346.8h1.8v1.4h-1.8zM270.3 340.8h1.8v2.8h-1.8zM274.8 341.3h1.8v2.3h-1.8zM278.0 341.4h1.8v2.2h-1.8zM278.0 346.8h1.8v2.1h-1.8zM281.2 340.7h1.8v2.9h-1.8zM288.2 346.8h1.8v1.4h-1.8zM292.7 341.6h1.8v2.0h-1.8zM292.7 346.8h1.8v1.6h-1.8zM299.7 346.8h1.8v1.9h-1.8zM306.7 346.8h1.8v2.8h-1.8zM317.6 341.8h1.8v1.8h-1.8zM317.6 346.8h1.8v2.5h-1.8zM320.0 341.1h1.8v2.5h-1.8zM320.0 346.8h1.8v1.9h-1.8zM325.2 342.3h1.8v1.3h-1.8zM325.2 346.8h1.8v3.0h-1.8zM328.4 346.8h1.8v1.7h-1.8zM330.8 346.8h1.8v2.6h-1.8zM335.3 346.8h1.8v2.9h-1.8zM339.8 341.4h1.8v2.2h-1.8zM343.6 341.2h1.8v2.4h-1.8zM343.6 346.8h1.8v2.0h-1.8zM346.0 342.2h1.8v1.4h-1.8zM346.0 346.8h1.8v1.7h-1.8zM351.2 346.8h1.8v2.8h-1.8zM355.7 341.6h1.8v2.0h-1.8zM359.5 341.1h1.8v2.5h-1.8zM359.5 346.8h1.8v2.9h-1.8zM362.7 340.7h1.8v2.9h-1.8zM362.7 346.8h1.8v2.3h-1.8zM367.9 346.8h1.8v2.1h-1.8zM371.1 340.6h1.8v3.0h-1.8zM373.5 341.4h1.8v2.2h-1.8zM376.7 341.6h1.8v2.0h-1.8zM376.7 346.8h1.8v2.4h-1.8zM381.2 340.8h1.8v2.8h-1.8zM381.2 346.8h1.8v2.9h-1.8zM385.0 341.8h1.8v1.8h-1.8zM388.2 342.3h1.8v1.3h-1.8zM388.2 346.8h1.8v1.4h-1.8zM390.6 341.6h1.8v2.0h-1.8zM393.0 340.8h1.8v2.8h-1.8zM396.8 342.3h1.8v1.3h-1.8zM396.8 346.8h1.8v1.5h-1.8zM400.6 340.7h1.8v2.9h-1.8zM400.6 346.8h1.8v3.0h-1.8zM405.8 340.8h1.8v2.8h-1.8zM405.8 346.8h1.8v1.6h-1.8zM409.0 341.5h1.8v2.1h-1.8zM409.0 346.8h1.8v2.1h-1.8zM412.2 342.2h1.8v1.4h-1.8zM414.6 341.7h1.8v1.9h-1.8zM414.6 346.8h1.8v1.7h-1.8zM417.8 340.9h1.8v2.7h-1.8zM421.0 340.8h1.8v2.8h-1.8zM430.0 341.2h1.8v2.4h-1.8zM437.6 340.9h1.8v2.7h-1.8zM454.4 341.3h1.8v2.3h-1.8zM454.4 346.8h1.8v2.9h-1.8zM458.9 346.8h1.8v2.3h-1.8zM464.1 342.4h1.8v1.2h-1.8zM464.1 346.8h1.8v2.6h-1.8zM469.3 346.8h1.8v2.1h-1.8zM473.8 341.9h1.8v1.7h-1.8zM473.8 346.8h1.8v2.5h-1.8zM477.0 341.6h1.8v2.0h-1.8zM477.0 346.8h1.8v2.7h-1.8zM479.4 341.0h1.8v2.6h-1.8zM479.4 346.8h1.8v2.3h-1.8zM482.6 341.9h1.8v1.7h-1.8zM482.6 346.8h1.8v2.5h-1.8zM486.4 341.5h1.8v2.1h-1.8zM486.4 346.8h1.8v2.1h-1.8zM488.8 341.9h1.8v1.7h-1.8zM488.8 346.8h1.8v2.1h-1.8zM493.3 340.6h1.8v3.0h-1.8zM498.5 340.7h1.8v2.9h-1.8zM500.9 341.5h1.8v2.1h-1.8zM500.9 346.8h1.8v3.0h-1.8zM504.7 340.7h1.8v2.9h-1.8zM507.1 341.5h1.8v2.1h-1.8zM507.1 346.8h1.8v2.9h-1.8zM510.3 341.9h1.8v1.7h-1.8zM510.3 346.8h1.8v1.4h-1.8zM514.1 341.5h1.8v2.1h-1.8zM516.5 341.2h1.8v2.4h-1.8zM521.0 341.8h1.8v1.8h-1.8zM521.0 346.8h1.8v1.8h-1.8zM524.8 340.9h1.8v2.7h-1.8zM527.2 346.8h1.8v1.2h-1.8zM531.0 341.7h1.8v1.9h-1.8zM531.0 346.8h1.8v2.8h-1.8zM533.4 341.9h1.8v1.7h-1.8zM533.4 346.8h1.8v1.3h-1.8zM535.8 341.3h1.8v2.3h-1.8zM535.8 346.8h1.8v1.5h-1.8zM539.6 341.0h1.8v2.6h-1.8zM539.6 346.8h1.8v2.6h-1.8zM553.8 340.7h1.8v2.9h-1.8zM553.8 346.8h1.8v1.9h-1.8zM559.0 346.8h1.8v1.7h-1.8zM561.4 346.8h1.8v1.5h-1.8zM565.9 341.1h1.8v2.5h-1.8zM565.9 346.8h1.8v3.0h-1.8zM569.7 341.5h1.8v2.1h-1.8zM569.7 346.8h1.8v2.4h-1.8zM572.1 342.0h1.8v1.6h-1.8zM572.1 346.8h1.8v2.8h-1.8zM576.6 341.8h1.8v1.8h-1.8zM576.6 346.8h1.8v2.6h-1.8zM581.1 342.2h1.8v1.4h-1.8zM581.1 346.8h1.8v1.8h-1.8zM583.5 340.9h1.8v2.7h-1.8zM583.5 346.8h1.8v1.6h-1.8zM585.9 346.8h1.8v1.9h-1.8zM591.1 341.0h1.8v2.6h-1.8zM591.1 346.8h1.8v2.1h-1.8zM596.3 346.8h1.8v2.1h-1.8zM599.5 341.7h1.8v1.9h-1.8zM604.0 340.9h1.8v2.7h-1.8zM604.0 346.8h1.8v2.9h-1.8zM607.2 340.8h1.8v2.8h-1.8zM611.7 346.8h1.8v1.3h-1.8zM620.1 346.8h1.8v1.5h-1.8zM627.0 342.4h1.8v1.2h-1.8zM630.2 341.2h1.8v2.4h-1.8zM634.0 346.8h1.8v2.2h-1.8zM638.5 342.3h1.8v1.3h-1.8zM638.5 346.8h1.8v2.1h-1.8zM643.7 341.0h1.8v2.6h-1.8zM643.7 346.8h1.8v1.2h-1.8zM648.9 340.7h1.8v2.9h-1.8zM648.9 346.8h1.8v2.4h-1.8zM652.1 342.0h1.8v1.6h-1.8zM652.1 346.8h1.8v2.9h-1.8zM655.9 340.8h1.8v2.8h-1.8zM655.9 346.8h1.8v2.4h-1.8zM658.3 340.7h1.8v2.9h-1.8zM658.3 346.8h1.8v1.6h-1.8zM660.7 341.7h1.8v1.9h-1.8zM665.2 341.1h1.8v2.5h-1.8zM670.4 342.0h1.8v1.6h-1.8zM670.4 346.8h1.8v2.6h-1.8zM673.6 341.0h1.8v2.6h-1.8zM673.6 346.8h1.8v1.7h-1.8zM678.8 342.0h1.8v1.6h-1.8zM678.8 346.8h1.8v2.0h-1.8zM681.2 346.8h1.8v1.9h-1.8zM684.4 341.7h1.8v1.9h-1.8zM684.4 346.8h1.8v2.5h-1.8zM687.6 340.8h1.8v2.8h-1.8zM693.8 341.5h1.8v2.1h-1.8zM693.8 346.8h1.8v2.0h-1.8zM697.6 341.7h1.8v1.9h-1.8zM697.6 346.8h1.8v1.8h-1.8zM700.8 342.3h1.8v1.3h-1.8zM700.8 346.8h1.8v2.0h-1.8zM703.2 341.7h1.8v1.9h-1.8zM707.0 346.8h1.8v1.3h-1.8zM711.5 341.6h1.8v2.0h-1.8zM711.5 346.8h1.8v1.8h-1.8zM716.0 340.9h1.8v2.7h-1.8zM716.0 346.8h1.8v2.6h-1.8zM718.4 341.0h1.8v2.6h-1.8zM718.4 346.8h1.8v1.3h-1.8zM725.4 340.7h1.8v2.9h-1.8zM725.4 346.8h1.8v1.3h-1.8zM729.2 346.8h1.8v2.5h-1.8zM734.4 346.8h1.8v2.9h-1.8zM736.8 346.8h1.8v2.5h-1.8zM741.3 346.8h1.8v1.7h-1.8zM745.8 346.8h1.8v2.1h-1.8zM751.4 341.8h1.8v1.8h-1.8zM751.4 346.8h1.8v1.9h-1.8zM756.6 341.0h1.8v2.6h-1.8zM756.6 346.8h1.8v1.6h-1.8zM759.0 341.4h1.8v2.2h-1.8zM759.0 346.8h1.8v1.5h-1.8zM767.3 341.6h1.8v2.0h-1.8zM767.3 346.8h1.8v3.0h-1.8zM771.8 341.6h1.8v2.0h-1.8zM771.8 346.8h1.8v2.8h-1.8zM777.4 346.8h1.8v1.7h-1.8zM781.2 342.0h1.8v1.6h-1.8zM784.4 341.9h1.8v1.7h-1.8zM784.4 346.8h1.8v2.8h-1.8zM787.6 340.6h1.8v3.0h-1.8zM787.6 346.8h1.8v2.1h-1.8zM790.8 341.6h1.8v2.0h-1.8zM790.8 346.8h1.8v1.3h-1.8zM793.2 340.9h1.8v2.7h-1.8zM797.0 342.2h1.8v1.4h-1.8zM797.0 346.8h1.8v1.5h-1.8zM802.2 341.5h1.8v2.1h-1.8zM802.2 346.8h1.8v1.5h-1.8zM807.4 340.7h1.8v2.9h-1.8zM809.8 341.8h1.8v1.8h-1.8zM812.2 342.0h1.8v1.6h-1.8zM812.2 346.8h1.8v1.7h-1.8zM819.8 346.8h1.8v1.9h-1.8zM825.0 341.0h1.8v2.6h-1.8zM825.0 346.8h1.8v2.2h-1.8zM827.4 341.2h1.8v2.4h-1.8zM830.6 342.1h1.8v1.5h-1.8zM830.6 346.8h1.8v2.5h-1.8zM835.1 346.8h1.8v2.0h-1.8zM837.5 341.8h1.8v1.8h-1.8zM837.5 346.8h1.8v1.9h-1.8zM841.3 341.7h1.8v1.9h-1.8zM841.3 346.8h1.8v2.9h-1.8zM845.8 346.8h1.8v2.7h-1.8zM850.3 341.0h1.8v2.6h-1.8zM850.3 346.8h1.8v1.4h-1.8zM852.7 340.8h1.8v2.8h-1.8zM852.7 346.8h1.8v1.4h-1.8zM861.1 341.5h1.8v2.1h-1.8zM861.1 346.8h1.8v2.9h-1.8zM863.5 341.0h1.8v2.6h-1.8zM866.7 342.3h1.8v1.3h-1.8zM871.2 341.3h1.8v2.3h-1.8zM871.2 346.8h1.8v1.4h-1.8zM876.4 341.2h1.8v2.4h-1.8zM879.6 342.0h1.8v1.6h-1.8zM879.6 346.8h1.8v2.1h-1.8zM884.8 341.5h1.8v2.1h-1.8zM884.8 346.8h1.8v1.9h-1.8zM887.2 340.9h1.8v2.7h-1.8zM890.4 341.0h1.8v2.6h-1.8zM890.4 346.8h1.8v1.3h-1.8zM894.2 341.4h1.8v2.2h-1.8zM894.2 346.8h1.8v2.3h-1.8zM898.0 342.0h1.8v1.6h-1.8zM898.0 346.8h1.8v1.9h-1.8zM901.8 342.4h1.8v1.2h-1.8zM901.8 346.8h1.8v2.3h-1.8zM906.3 341.3h1.8v2.3h-1.8zM906.3 346.8h1.8v2.7h-1.8zM909.5 346.8h1.8v1.3h-1.8zM913.3 341.6h1.8v2.0h-1.8zM913.3 346.8h1.8v2.1h-1.8zM915.7 340.7h1.8v2.9h-1.8zM915.7 346.8h1.8v1.8h-1.8zM920.9 340.8h1.8v2.8h-1.8zM924.1 341.3h1.8v2.3h-1.8zM924.1 346.8h1.8v2.4h-1.8zM926.5 341.5h1.8v2.1h-1.8zM929.7 342.0h1.8v1.6h-1.8zM933.5 341.8h1.8v1.8h-1.8zM933.5 346.8h1.8v2.3h-1.8zM938.0 340.7h1.8v2.9h-1.8zM938.0 346.8h1.8v1.6h-1.8zM941.8 341.7h1.8v1.9h-1.8zM941.8 346.8h1.8v1.6h-1.8zM946.3 341.2h1.8v2.4h-1.8zM950.8 342.2h1.8v1.4h-1.8zM956.0 340.7h1.8v2.9h-1.8zM960.5 340.8h1.8v2.8h-1.8zM960.5 346.8h1.8v1.4h-1.8zM965.7 341.0h1.8v2.6h-1.8zM965.7 346.8h1.8v1.7h-1.8zM969.5 341.0h1.8v2.6h-1.8zM969.5 346.8h1.8v2.0h-1.8zM972.7 341.9h1.8v1.7h-1.8zM977.9 340.6h1.8v3.0h-1.8zM977.9 346.8h1.8v2.3h-1.8zM984.9 341.6h1.8v2.0h-1.8zM984.9 346.8h1.8v2.1h-1.8zM987.3 341.2h1.8v2.4h-1.8zM987.3 346.8h1.8v1.2h-1.8zM989.7 341.5h1.8v2.1h-1.8zM989.7 346.8h1.8v2.2h-1.8z" fill="#d80010"/>
<circle cx="21.4" cy="12.1" r="8.1" fill="none" stroke="#eca418" stroke-width="4.2"/>
<path d="M35.5 2.7V14A5.55 5.55 0 0 0 46.6 14V2.7M46.6 14A5.07 5.07 0 0 0 56.75 14V2.7" fill="none" stroke="#0a1020" stroke-width="4.4"/>
<ellipse cx="70.45" cy="12.1" rx="7.4" ry="7.3" fill="none" stroke="#0a1020" stroke-width="4.4"/>
<path d="M84.9 21.5V10.9A6.05 6.05 0 0 1 97 10.9V21.5" fill="none" stroke="#0a1020" stroke-width="4.4"/>
<path d="M161.3 1H248.8A8 11.25 0 0 1 248.8 23.5H161.3A8 11.25 0 0 1 161.3 1Z" fill="#00d000"/>
<g transform="translate(179,19) scale(1.0,1.03)" fill="none" stroke="#0a300a" stroke-width="1.4"><path transform="translate(0.00,0)" d="M1.2 0L6 -12.3L11.6 0 M3.2 -4.2H9.8 M0 0H3.6M9.2 0H12.6M3.6 -12.3H6"/><path transform="translate(12.60,0)" d="M3 -8.0V-2.6Q3 0.2 6 0.2Q8.6 0.2 9.8 -2.4M9.8 -8.0V0H11.8M1 -8.0H3M7.8 -8.0H9.8"/><path transform="translate(25.20,0)" d="M4.8 -11V-2Q4.8 0.2 7.4 0.2Q9.4 0.2 10.8 -0.8M1.6 -8.0H10"/><path transform="translate(37.80,0)" d="M6.4 -8.2A4.2 4.2 0 1 1 6.4 0.2A4.2 4.2 0 1 1 6.4 -8.2Z"/></g>
<path d="M327.0 0H696.8A6.5 12.0 0 0 1 696.8 24H327.0A6.5 12.0 0 0 1 327.0 0Z" fill="#000"/>
<rect x="332.7" y="10.8" width="359.3" height="2.1" fill="#a4a458"/>
<path d="M376.3 2h3.6v2h-1.2v17.6h0.9v1.9h-3.3z" fill="#bcbcbc"/>
<path d="M647.7 2h-3.6v2h1.2v17.6h-0.9v1.9h3.3z" fill="#bcbcbc"/>
<path d="M509 2.5h7v2h-2.6v4.3h-1.8v-4.3h-2.6z" fill="#e020c0"/>
<path d="M723.0 0.5H848.0A6.5 11.75 0 0 1 848.0 24H723.0A6.5 11.75 0 0 1 723.0 0.5Z" fill="#000"/>
<path d="M723.9 4.5H735.9Q737.4 4.5 737.4 6.0V17.0L729.9 21.3L722.4 17.0V6.0Q722.4 4.5 723.9 4.5Z" fill="#000" stroke="#7a24c8" stroke-width="1.8"/><path d="M725.3 8.8h9.2v2.2h-3.5v8.3h-2.2v-8.3h-3.5z" fill="#a040e8"/>
<g transform="translate(740.2,20.3) scale(1.0,1.07)" fill="none" stroke="#e0e0e0" stroke-width="1.35"><path transform="translate(0.00,0)" d="M6.4 -12.3A3.9 6.15 0 1 1 6.4 0A3.9 6.15 0 1 1 6.4 -12.3Z"/><path transform="translate(12.80,0)" d="M5.6 -1.7h1.7v1.7h-1.7z" fill="#e0e0e0" stroke="none"/><path transform="translate(25.60,0)" d="M6.4 -12.3A3.9 6.15 0 1 1 6.4 0A3.9 6.15 0 1 1 6.4 -12.3Z"/><path transform="translate(38.40,0)" d="M6.4 -12.3A3.9 6.15 0 1 1 6.4 0A3.9 6.15 0 1 1 6.4 -12.3Z"/><path transform="translate(51.20,0)" d="M6.4 -12.3A3.9 6.15 0 1 1 6.4 0A3.9 6.15 0 1 1 6.4 -12.3Z"/><path transform="translate(64.00,0)" d="M3 -8.0V0M1 -8.0H3M3 -5.8Q4.6 -8.2 6.8 -8.2Q9.8 -8.2 9.8 -5.4V0M1 0H5M7.8 0H11.8"/><path transform="translate(76.80,0)" d="M9.8 -7.2Q8.4 -8.2 6.4 -8.2Q2.8 -8.2 2.8 -6Q2.8 -4.3 6.4 -4Q10 -3.7 10 -2Q10 0.2 6.4 0.2Q4 0.2 2.6 -1M9.8 -8.2V-6.4M2.6 -2V0"/></g>
<path d="M967.5 5.5L971 3L976.5 7.5L975.5 12L972.5 12.5L968 9.5Z" fill="#48b828"/>
<path d="M970 6L972 4.5L975 7L973 9Z" fill="#80e050"/>
<path d="M969.5 14.5L977.5 9.5L983 15.5L974.5 20Z" fill="#a8b4c8"/>
<path d="M969.5 14.5L977.5 9.5L983 15.5L974.5 20Z" fill="none" stroke="#405070" stroke-width="0.7"/>
<circle cx="975.8" cy="14.6" r="1.8" fill="#503878"/>
<path d="M506.9 26.0H519.8Q521.3 26.0 521.3 27.5V38.5L513.3 42.8L505.4 38.5V27.5Q505.4 26.0 506.9 26.0Z" fill="#000" stroke="#7424c4" stroke-width="1.8"/><path d="M508.7 30.3h9.2v2.2h-3.5v8.3h-2.2v-8.3h-3.5z" fill="#9c3ce4"/>
<path d="M998.6 94.4L1015.4 87V101.4Z" fill="#b020d8"/>
<path d="M0.8 335H18.6L23.8 345.3L18.6 355.6H0.8Z" fill="#000" stroke="#c81020" stroke-width="1.6"/>
<path d="M9 342.5L12 339.5H13.5V353H11.5V342.5L9.5 344Z" fill="#e00010"/>
<rect x="0" y="664" width="1024" height="104" fill="#0080e0"/>
<rect x="408" y="688" width="614" height="77" fill="#0060a0"/>
<rect x="408" y="688" width="5" height="77" fill="#0068b8"/>
<rect x="0" y="664" width="1.6" height="104" fill="#64aaa6"/>
<rect x="267" y="664" width="3.2" height="52" fill="#64aaa6"/>
<rect x="405" y="664" width="3.2" height="104" fill="#64aaa6"/>
<rect x="0" y="715" width="408" height="3" fill="#64aaa6"/>
<rect x="0" y="765.2" width="408" height="2.8" fill="#64aaa6"/>
<rect x="2" y="664.5" width="264.5" height="25.3" rx="4" fill="#000"/>
<rect x="2" y="690.8" width="264.5" height="24.2" rx="4" fill="#000"/>
<rect x="1.6" y="689.8" width="265" height="1" fill="#103060"/>
<rect x="270.2" y="664.6" width="134.8" height="50" rx="5" fill="#000"/>
<rect x="1.6" y="718" width="403.4" height="22.3" rx="3" fill="#000"/>
<circle cx="13" cy="678.5" r="10.5" fill="#f00010"/>
<path d="M9.5 675L13.5 670.5H15V686H12.8V674.5L10.5 676.5Z" fill="#500010"/>
<circle cx="12.8" cy="703.3" r="10.2" fill="#e8e020"/>
<circle cx="12.2" cy="728.3" r="10.4" fill="#e8e020"/>
<g transform="translate(7.3,710) scale(0.8,1)"><text x="0" y="0" font-size="20" letter-spacing="4.000" fill="#202010" xml:space="preserve" stroke="#202010" stroke-width="0.7">2</text></g>
<g transform="translate(6.7,734.8) scale(0.8,1)"><text x="0" y="0" font-size="20" letter-spacing="4.000" fill="#202010" xml:space="preserve" stroke="#202010" stroke-width="0.7">2</text></g>
<g transform="translate(23,686.2) scale(1.0,1.04)" fill="none" stroke="#e01018" stroke-width="1.35"><path transform="translate(0.00,0)" d="M3.4 -10.2L6.6 -12.3V0M3 0H10.2"/><path transform="translate(12.80,0)" d="M6.4 -12.3A3.9 6.15 0 1 1 6.4 0A3.9 6.15 0 1 1 6.4 -12.3Z"/><path transform="translate(25.60,0)" d="M2 -12.3L6.4 0L10.8 -12.3M0.4 -12.3H4M8.8 -12.3H12.2"/><path transform="translate(38.40,0)" d="M3 -6H9.6"/></g>
<g transform="translate(134.1,686.2) scale(1.0,1.04)" fill="none" stroke="#e01018" stroke-width="1.35"><path transform="translate(0.00,0)" d="M6.4 -12.3A3.9 6.15 0 1 1 6.4 0A3.9 6.15 0 1 1 6.4 -12.3Z"/><path transform="translate(12.80,0)" d="M5.6 -1.7h1.7v1.7h-1.7z" fill="#e01018" stroke="none"/><path transform="translate(25.60,0)" d="M6.4 -12.3A3.9 6.15 0 1 1 6.4 0A3.9 6.15 0 1 1 6.4 -12.3Z"/><path transform="translate(38.40,0)" d="M6.4 -12.3A3.9 6.15 0 1 1 6.4 0A3.9 6.15 0 1 1 6.4 -12.3Z"/><path transform="translate(51.20,0)" d="M9.8 -12.3V0M7.6 -12.3H9.8M9.8 0H11.8M9.8 -6.2Q8.6 -8.2 6.2 -8.2Q2.4 -8.2 2.4 -4Q2.4 0.2 6.2 0.2Q8.6 0.2 9.8 -1.8"/><path transform="translate(64.00,0)" d="M6.4 -8.0V0M3.4 -8.0H6.4M2.8 0H10"/><path transform="translate(64.00,0)" d="M5.6 -12.4h1.6v1.8h-1.6z" fill="#e01018" stroke="none"/><path transform="translate(76.80,0)" d="M2.4 -8.0L6.4 0L10.4 -8.0M0.6 -8.0H4.4M8.4 -8.0H12.2"/></g>
<g transform="translate(22.2,709.9) scale(1.0,1.04)" fill="none" stroke="#e4dc48" stroke-width="1.35"><path transform="translate(0.00,0)" d="M10 -12.3H3.6L3.1 -6.8Q4.6 -7.9 6.5 -7.9Q10.3 -7.9 10.3 -3.9Q10.3 0.2 6.2 0.2Q3.8 0.2 2.4 -1.3"/><path transform="translate(12.80,0)" d="M6.4 -12.3A3.9 6.15 0 1 1 6.4 0A3.9 6.15 0 1 1 6.4 -12.3Z"/><path transform="translate(25.60,0)" d="M5.6 -1.7h1.7v1.7h-1.7z" fill="#e4dc48" stroke="none"/><path transform="translate(38.40,0)" d="M6.4 -12.3A3.9 6.15 0 1 1 6.4 0A3.9 6.15 0 1 1 6.4 -12.3Z"/><path transform="translate(51.20,0)" d="M1.8 -8.0V0M0.2 -8.0H1.8M1.8 -6Q2.8 -8.2 4.2 -8.2Q6.4 -8.2 6.4 -6V0M6.4 -6Q7.4 -8.2 8.8 -8.2Q11 -8.2 11 -6V0M0.4 0H3.2M5.1 0H7.7M9.6 0H12.4"/><path transform="translate(64.00,0)" d="M2 -12.3L6.4 0L10.8 -12.3M0.4 -12.3H4M8.8 -12.3H12.2"/><path transform="translate(76.80,0)" d="M2.4 -4.8Q4.4 -7.6 6.4 -6.1Q8.4 -4.6 10.4 -7.2"/></g>
<g transform="translate(134.4,709.9) scale(1.0,1.04)" fill="none" stroke="#e4dc48" stroke-width="1.35"><path transform="translate(0.00,0)" d="M6.4 -12.3A3.9 6.15 0 1 1 6.4 0A3.9 6.15 0 1 1 6.4 -12.3Z"/><path transform="translate(12.80,0)" d="M5.6 -1.7h1.7v1.7h-1.7z" fill="#e4dc48" stroke="none"/><path transform="translate(25.60,0)" d="M6.4 -12.3A3.9 6.15 0 1 1 6.4 0A3.9 6.15 0 1 1 6.4 -12.3Z"/><path transform="translate(38.40,0)" d="M6.4 -12.3A3.9 6.15 0 1 1 6.4 0A3.9 6.15 0 1 1 6.4 -12.3Z"/><path transform="translate(51.20,0)" d="M9.8 -12.3V0M7.6 -12.3H9.8M9.8 0H11.8M9.8 -6.2Q8.6 -8.2 6.2 -8.2Q2.4 -8.2 2.4 -4Q2.4 0.2 6.2 0.2Q8.6 0.2 9.8 -1.8"/><path transform="translate(64.00,0)" d="M6.4 -8.0V0M3.4 -8.0H6.4M2.8 0H10"/><path transform="translate(64.00,0)" d="M5.6 -12.4h1.6v1.8h-1.6z" fill="#e4dc48" stroke="none"/><path transform="translate(76.80,0)" d="M2.4 -8.0L6.4 0L10.4 -8.0M0.6 -8.0H4.4M8.4 -8.0H12.2"/></g>
<g transform="translate(27.9,735.7) scale(1.0,1.04)" fill="none" stroke="#e4dc48" stroke-width="1.35"><path transform="translate(0.00,0)" d="M2.6 -12.3V0M0.8 -12.3H10.4V-9.4M2.6 -6.4H8.2M8.2 -8.2V-4.6M0.8 0H6.4"/><path transform="translate(12.80,0)" d="M5.6 -8.1h1.7v1.7h-1.7zM5.6 -1.7h1.7v1.7h-1.7z" fill="#e4dc48" stroke="none"/><path transform="translate(25.60,0)" d="M6.4 -12.3A4.9 6.15 0 1 1 6.4 0A4.9 6.15 0 1 1 6.4 -12.3Z"/><path transform="translate(38.40,0)" d="M2.6 -12.3V0M0.8 -12.3H10.4V-9.4M2.6 -6.4H8.2M8.2 -8.2V-4.6M0.8 0H6.4"/><path transform="translate(51.20,0)" d="M2.6 -12.3V0M0.8 -12.3H10.4V-9.4M2.6 -6.4H8.2M8.2 -8.2V-4.6M0.8 0H6.4"/></g>
<g transform="translate(285.5,684) scale(1.0,1.0)" fill="none" stroke="#e4e4e4" stroke-width="1.35"><path transform="translate(0.00,0)" d="M8.6 -14.4Q4.4 -10.2 4.4 -5.8Q4.4 -1.4 8.6 2.8"/><path transform="translate(12.80,0)" d="M2.8 -9.4Q3.2 -12.5 6.4 -12.5Q9.8 -12.5 9.8 -9.3Q9.8 -7 6.6 -4.6L2.5 0H10.4V-1.9"/><path transform="translate(25.60,0)" d="M10 -12.3H3.6L3.1 -6.8Q4.6 -7.9 6.5 -7.9Q10.3 -7.9 10.3 -3.9Q10.3 0.2 6.2 0.2Q3.8 0.2 2.4 -1.3"/><path transform="translate(38.40,0)" d="M2.6 -12.3V0M0.8 -12.3H5.2M0.8 0H5.2M2.6 -4.6L10.2 -12.3M5.4 -7.2L10.8 0M7.8 -12.3H12.2M8.6 0H11.8"/><path transform="translate(51.20,0)" d="M10 -10.6C9 -12.1 7.8 -12.5 6.3 -12.5C3.6 -12.5 2.5 -11 2.5 -9.3C2.5 -7.2 4.4 -6.7 6.4 -6.3C8.6 -5.8 10.4 -5.1 10.4 -3C10.4 -1 8.9 0.2 6.3 0.2C4.4 0.2 3 -0.4 2.2 -1.9M10 -12.3V-9.6M2.2 -3V0"/><path transform="translate(64.00,0)" d="M9.8 -8.6L3 0.2"/><path transform="translate(76.80,0)" d="M9.8 -7.2Q8.4 -8.2 6.4 -8.2Q2.8 -8.2 2.8 -6Q2.8 -4.3 6.4 -4Q10 -3.7 10 -2Q10 0.2 6.4 0.2Q4 0.2 2.6 -1M9.8 -8.2V-6.4M2.6 -2V0"/><path transform="translate(89.60,0)" d="M4.2 -14.4Q8.4 -10.2 8.4 -5.8Q8.4 -1.4 4.2 2.8"/></g>
<g transform="translate(279.6,708.5) scale(1.0,1.0)" fill="none" stroke="#e4e4e4" stroke-width="1.35"><path transform="translate(0.00,0)" d="M0.8 -12.3H6.6Q11.4 -12.3 11.4 -6.15Q11.4 0 6.6 0H0.8M2.6 -12.3V0"/><path transform="translate(12.80,0)" d="M2.5 -4.1H10.3Q10.3 -8.2 6.4 -8.2Q2.4 -8.2 2.4 -4Q2.4 0.2 6.6 0.2Q9 0.2 10.6 -1.4"/><path transform="translate(25.60,0)" d="M3 -8.0V4.0M1 -8.0H3M1 4.0H5.6M3 -6.2Q4.4 -8.2 6.8 -8.2Q10.4 -8.2 10.4 -4Q10.4 0.2 6.8 0.2Q4.4 0.2 3 -1.8"/><path transform="translate(38.40,0)" d="M4.8 -11V-2Q4.8 0.2 7.4 0.2Q9.4 0.2 10.8 -0.8M1.6 -8.0H10"/><path transform="translate(51.20,0)" d="M3 -12.3V0M1 -12.3H3M3 -5.6Q4.6 -8.2 7 -8.2Q9.8 -8.2 9.8 -5.4V0M1 0H5M7.8 0H11.8"/><path transform="translate(64.00,0)" d="M5.6 -8.1h1.7v1.7h-1.7zM5.6 -1.7h1.7v1.7h-1.7z" fill="#e4e4e4" stroke="none"/><path transform="translate(76.80,0)" d="M3.4 -10.2L6.6 -12.3V0M3 0H10.2"/><path transform="translate(89.60,0)" d="M6.4 -12.3A3.9 6.15 0 1 1 6.4 0A3.9 6.15 0 1 1 6.4 -12.3Z"/><path transform="translate(102.40,0)" d="M2.6 -12.3V0M0.8 -12.3H5.2M0.8 0H5.2M2.6 -4.6L10.2 -12.3M5.4 -7.2L10.8 0M7.8 -12.3H12.2M8.6 0H11.8"/></g>
<path d="M416.8 664.6H526.9A8 11.449999999999989 0 0 1 526.9 687.5H416.8A8 11.449999999999989 0 0 1 416.8 664.6Z" fill="#000"/>
<g transform="translate(432.8,683.2) scale(1.0,1.04)" fill="none" stroke="#e4e4e4" stroke-width="1.35"><path transform="translate(0.00,0)" d="M1.8 -12.3V0M11 -12.3V0M1.8 -12.3L6.4 -3.8L11 -12.3M0.2 -12.3H1.8M11 -12.3H12.6M0.2 0H4M8.8 0H12.6"/><path transform="translate(12.80,0)" d="M5.6 -8.1h1.7v1.7h-1.7zM5.6 -1.7h1.7v1.7h-1.7z" fill="#e4e4e4" stroke="none"/><path transform="translate(25.60,0)" d="M2.8 -9.4Q3.2 -12.5 6.4 -12.5Q9.8 -12.5 9.8 -9.3Q9.8 -7 6.6 -4.6L2.5 0H10.4V-1.9"/><path transform="translate(38.40,0)" d="M6.4 -12.3A3.9 6.15 0 1 1 6.4 0A3.9 6.15 0 1 1 6.4 -12.3Z"/><path transform="translate(51.20,0)" d="M1.8 -8.0V0M0.2 -8.0H1.8M1.8 -6Q2.8 -8.2 4.2 -8.2Q6.4 -8.2 6.4 -6V0M6.4 -6Q7.4 -8.2 8.8 -8.2Q11 -8.2 11 -6V0M0.4 0H3.2M5.1 0H7.7M9.6 0H12.4"/><path transform="translate(64.00,0)" d="M9.8 -7.2Q8.4 -8.2 6.4 -8.2Q2.8 -8.2 2.8 -6Q2.8 -4.3 6.4 -4Q10 -3.7 10 -2Q10 0.2 6.4 0.2Q4 0.2 2.6 -1M9.8 -8.2V-6.4M2.6 -2V0"/></g>
<path d="M859 665H1008.4A8 11.5 0 0 1 1008.4 688H859A8 11.5 0 0 1 859 665Z" fill="#000"/>
<circle cx="864" cy="676.3" r="10.8" fill="#f00010"/>
<path d="M860.5 673L864.5 668.5H866V684H863.8V672.5L861.5 674.5Z" fill="#500010"/>
<path d="M878 684.6H887L893 669.4H902" fill="none" stroke="#d0d0d0" stroke-width="1.8"/>
<g transform="translate(903.5,684.5) scale(1.0,1.02)" fill="none" stroke="#e4e4e4" stroke-width="1.35"><path transform="translate(0.00,0)" d="M2.8 -10.8Q4 -12.5 6.4 -12.5Q9.6 -12.5 9.6 -9.5Q9.6 -6.6 5.8 -6.6Q10.2 -6.6 10.2 -3.3Q10.2 0.2 6.2 0.2Q3.8 0.2 2.4 -1.5"/><path transform="translate(12.80,0)" d="M6.4 -12.5A3.9 4.1 0 1 1 6.4 -4.3A3.9 4.1 0 1 1 6.4 -12.5ZM10.3 -8.4Q10.3 -2.6 8.2 -1.1Q6.6 0.2 3.4 0.2"/><path transform="translate(25.60,0)" d="M5.6 -1.7h1.7v1.7h-1.7z" fill="#e4e4e4" stroke="none"/><path transform="translate(38.40,0)" d="M2.8 -9.4Q3.2 -12.5 6.4 -12.5Q9.8 -12.5 9.8 -9.3Q9.8 -7 6.6 -4.6L2.5 0H10.4V-1.9"/><path transform="translate(51.20,0)" d="M2 -12.3L6.4 0L10.8 -12.3M0.4 -12.3H4M8.8 -12.3H12.2"/></g>
<rect x="412.8" y="692.5" width="114.69999999999999" height="71.20000000000005" rx="3" fill="#003e70"/><rect x="412.8" y="692.5" width="112.69999999999999" height="68.70000000000005" rx="3" fill="#50a8f8"/><rect x="414.8" y="694.5" width="110.69999999999999" height="66.70000000000005" rx="2" fill="#0080e0"/>
<rect x="765" y="692.5" width="114.20000000000005" height="71.20000000000005" rx="3" fill="#003e70"/><rect x="765" y="692.5" width="112.20000000000005" height="68.70000000000005" rx="3" fill="#50a8f8"/><rect x="767" y="694.5" width="110.20000000000005" height="66.70000000000005" rx="2" fill="#0080e0"/>
<g transform="translate(442.2,718.75) scale(1.0,1.02)" fill="none" stroke="#102a60" stroke-width="1.8"><path transform="translate(0.00,0)" d="M1.6 -9.4V-12.3H11.2V-9.4M6.4 -12.3V0M3.8 0H9"/><path transform="translate(12.80,0)" d="M2.6 -8.0L6.6 0M10.2 -8.0L5 4.0M0.8 -8.0H4.4M8.4 -8.0H12M2.4 4.0H7.6"/><path transform="translate(25.60,0)" d="M3 -8.0V4.0M1 -8.0H3M1 4.0H5.6M3 -6.2Q4.4 -8.2 6.8 -8.2Q10.4 -8.2 10.4 -4Q10.4 0.2 6.8 0.2Q4.4 0.2 3 -1.8"/><path transform="translate(38.40,0)" d="M2.5 -4.1H10.3Q10.3 -8.2 6.4 -8.2Q2.4 -8.2 2.4 -4Q2.4 0.2 6.6 0.2Q9 0.2 10.6 -1.4"/></g>
<rect x="436" y="730.8" width="64" height="25.5" fill="#e0e0e0"/>
<g transform="translate(436.9,749.6) scale(1.0,1.02)" fill="none" stroke="#101010" stroke-width="1.8"><path transform="translate(0.00,0)" d="M2.6 -12.3H10.2M6.4 -12.3V0M2.6 0H10.2"/><path transform="translate(12.80,0)" d="M1.8 -8.0V0M0.2 -8.0H1.8M1.8 -6Q2.8 -8.2 4.2 -8.2Q6.4 -8.2 6.4 -6V0M6.4 -6Q7.4 -8.2 8.8 -8.2Q11 -8.2 11 -6V0M0.4 0H3.2M5.1 0H7.7M9.6 0H12.4"/><path transform="translate(25.60,0)" d="M2.8 -7.2Q4.6 -8.2 6.6 -8.2Q9.8 -8.2 9.8 -5.6V0H11.8M9.8 -4.6Q7.6 -5 5.8 -5Q2.4 -5 2.4 -2.4Q2.4 0.2 5.4 0.2Q8 0.2 9.8 -1.8"/><path transform="translate(38.40,0)" d="M9.8 -8V1.2Q9.8 4.0 6.6 4.0H4M9.8 -8H11.8M9.8 -6.2Q8.6 -8.2 6.2 -8.2Q2.4 -8.2 2.4 -4.2Q2.4 -0.2 6.2 -0.2Q8.6 -0.2 9.8 -2.2"/><path transform="translate(51.20,0)" d="M2.5 -4.1H10.3Q10.3 -8.2 6.4 -8.2Q2.4 -8.2 2.4 -4Q2.4 0.2 6.6 0.2Q9 0.2 10.6 -1.4"/></g>
<text font-family="Liberation Sans" font-size="17.5" fill="#0a2a68" stroke="#0a2a68" stroke-width="0.6" y="734.2" text-anchor="middle"><tspan x="800.3 812.5 826.5 839">Save</tspan></text>
</svg>
</body></html>
